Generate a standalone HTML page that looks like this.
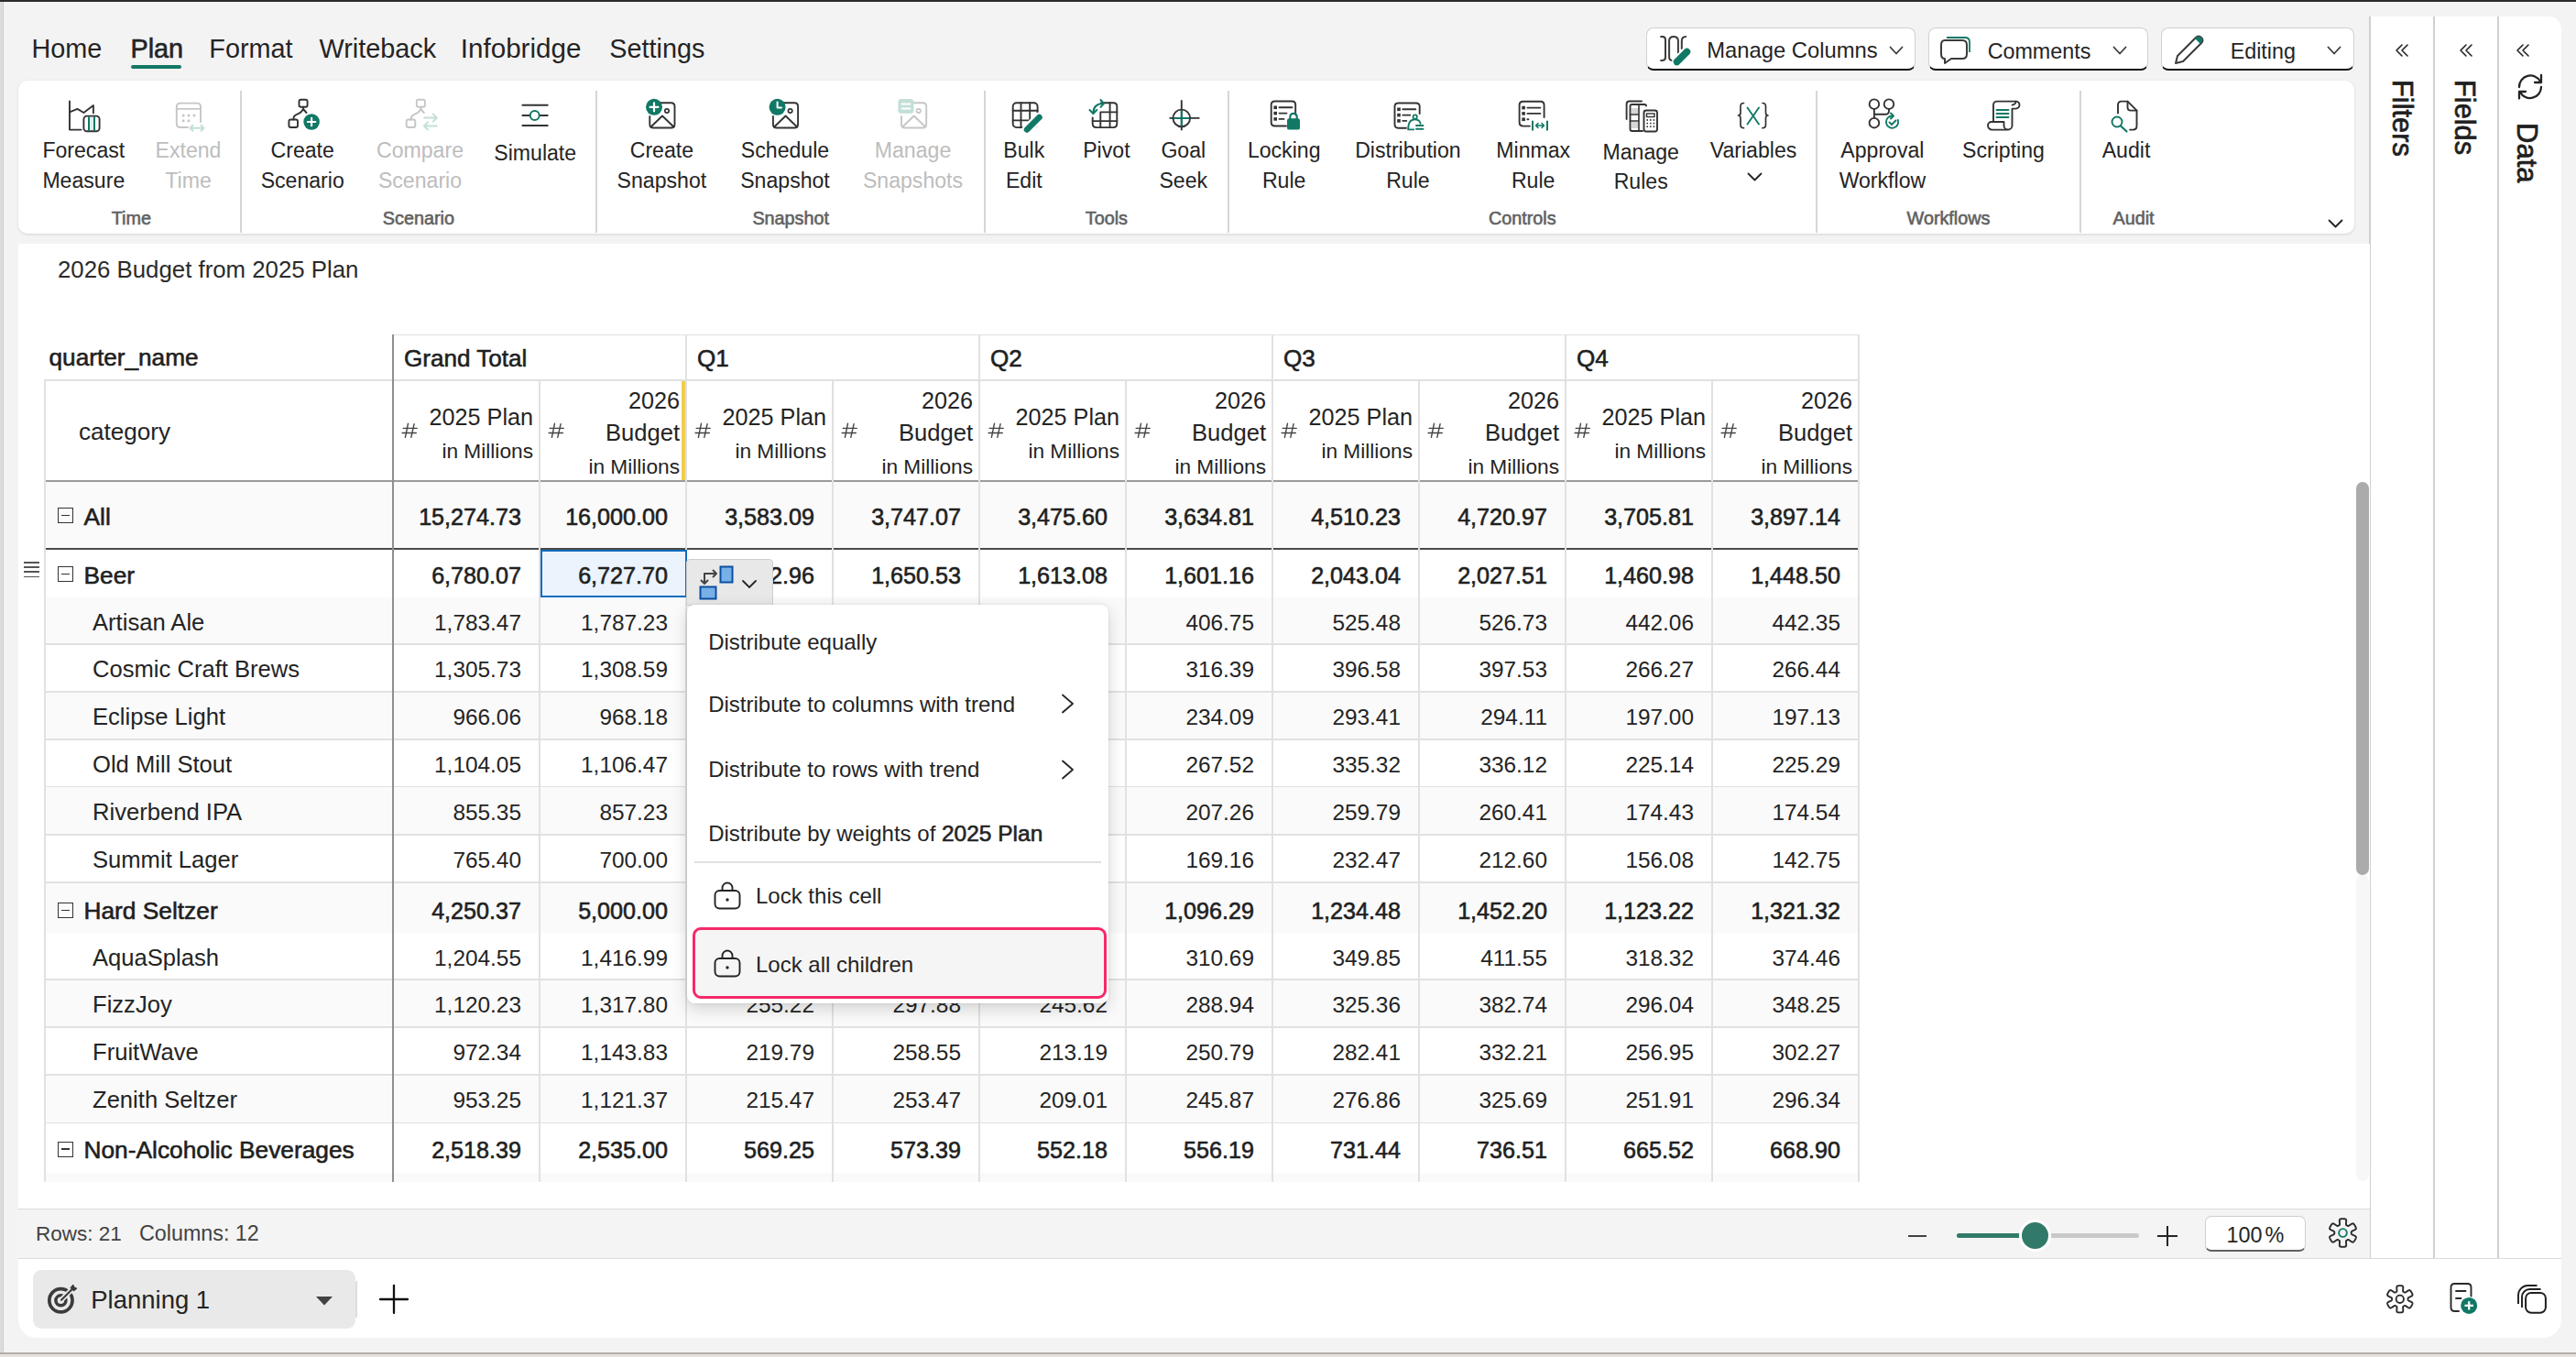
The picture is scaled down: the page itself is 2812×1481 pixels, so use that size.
<!DOCTYPE html>
<html><head><meta charset="utf-8"><style>
html,body{margin:0;padding:0;}
body{width:2812px;height:1481px;position:relative;overflow:hidden;background:#f3f3f3;font-family:'Liberation Sans', sans-serif;}
.a{position:absolute;}
.t{position:absolute;white-space:nowrap;line-height:1;}
</style></head><body>
<div class="a" style="left:0.00px;top:0.00px;width:2812.00px;height:2.00px;background:#2b2b2b"></div>
<div class="a" style="left:0.00px;top:2.00px;width:3.00px;height:1474.00px;background:#dcdcdc"></div>
<div class="a" style="left:3.00px;top:2.00px;width:1.00px;height:1474.00px;background:#cdcdcd"></div>
<div class="a" style="left:0.00px;top:1476.00px;width:2812.00px;height:2.00px;background:#b4ada7"></div>
<div class="a" style="left:0.00px;top:1478.00px;width:2812.00px;height:3.00px;background:#e8e0da"></div>
<div class="t" style="left:34.50px;top:38.52px;font-size:28.8px;font-weight:400;color:#242424;">Home</div>
<div class="t" style="left:142.50px;top:38.52px;font-size:28.8px;font-weight:400;-webkit-text-stroke:0.6px #242424;color:#242424;">Plan</div>
<div class="t" style="left:228.30px;top:38.52px;font-size:28.8px;font-weight:400;color:#242424;">Format</div>
<div class="t" style="left:348.60px;top:38.52px;font-size:28.8px;font-weight:400;color:#242424;">Writeback</div>
<div class="t" style="left:502.80px;top:37.84px;font-size:29.6px;font-weight:400;color:#242424;">Infobridge</div>
<div class="t" style="left:665.30px;top:38.52px;font-size:28.8px;font-weight:400;color:#242424;">Settings</div>
<div class="a" style="left:143.00px;top:71.00px;width:55.00px;height:4.00px;background:#117865;border-radius:2px"></div>
<div class="a" style="left:1797.00px;top:29.70px;width:294.00px;height:47.00px;background:#fff;border:1px solid #d1d1d1;border-bottom:2px solid #111;border-radius:8px;box-sizing:border-box"></div>
<div class="t" style="left:1863.20px;top:42.77px;font-size:23.8px;font-weight:400;color:#242424;">Manage Columns</div>
<svg class="a" style="left:1800.00px;top:30.00px;" width="50" height="48" viewBox="0 0 50 48" fill="none"><path d="M13.1 10 H15 Q18 10 18 13.5 V32.8 Q18 35.9 15 35.9 H13.1" stroke="#3b3b3b" stroke-width="2" stroke-linecap="round"/><path d="M25.3 35.9 Q22.1 35.9 22.1 32 V14.5 Q22.1 10 27 10 Q31.9 10 31.9 14.5 V27.4" stroke="#3b3b3b" stroke-width="2" stroke-linecap="round"/><path d="M40.2 10 Q35.8 10 35.8 15 V23" stroke="#3b3b3b" stroke-width="2" stroke-linecap="round"/><path d="M30.5 37.5 L41.5 26.5" stroke="#fff" stroke-width="11" stroke-linecap="round"/><path d="M30.5 37.5 L41.5 26.5" stroke="#117865" stroke-width="7.5" stroke-linecap="round"/></svg>
<svg class="a" style="left:2062.00px;top:49.50px;" width="16" height="11" viewBox="0 0 16 11" fill="none"><path d="M1.5 1.5 L8 8.5 L14.5 1.5" stroke="#3b3b3b" stroke-width="1.8" stroke-linecap="round" stroke-linejoin="round"/></svg>
<div class="a" style="left:2105.00px;top:29.70px;width:240.00px;height:47.00px;background:#fff;border:1px solid #d1d1d1;border-bottom:2px solid #111;border-radius:8px;box-sizing:border-box"></div>
<div class="t" style="left:2169.70px;top:44.90px;font-size:23.3px;font-weight:400;color:#242424;">Comments</div>
<svg class="a" style="left:2117.00px;top:37.00px;" width="36" height="34" viewBox="0 0 36 34" fill="none"><path d="M8 4 L28 4 Q33 4 33 9 L33 20" stroke="#117865" stroke-width="1.8" fill="none"/><path d="M6 7 L25 7 Q30 7 30 12 L30 22 Q30 27 25 27 L13 27 L6 32 L6 27 Q2 27 2 22 L2 12 Q2 7 6 7 Z" stroke="#3b3b3b" stroke-width="2" fill="#fff" stroke-linejoin="round"/></svg>
<svg class="a" style="left:2305.60px;top:49.50px;" width="16" height="11" viewBox="0 0 16 11" fill="none"><path d="M1.5 1.5 L8 8.5 L14.5 1.5" stroke="#3b3b3b" stroke-width="1.8" stroke-linecap="round" stroke-linejoin="round"/></svg>
<div class="a" style="left:2359.00px;top:29.70px;width:210.50px;height:47.00px;background:#fff;border:1px solid #d1d1d1;border-bottom:2px solid #111;border-radius:8px;box-sizing:border-box"></div>
<div class="t" style="left:2434.70px;top:44.90px;font-size:23.3px;font-weight:400;color:#242424;">Editing</div>
<svg class="a" style="left:2371.00px;top:37.00px;" width="36" height="36" viewBox="0 0 36 36" fill="none"><path d="M4 32 L6 24 L26 4 Q29 1 32 4 Q35 7 32 10 L12 30 Z" stroke="#3b3b3b" stroke-width="2" stroke-linejoin="round"/><path d="M25 5 Q29 1 32 4 Q35 7 31 11 Z" fill="#117865"/></svg>
<svg class="a" style="left:2540.00px;top:49.50px;" width="16" height="11" viewBox="0 0 16 11" fill="none"><path d="M1.5 1.5 L8 8.5 L14.5 1.5" stroke="#3b3b3b" stroke-width="1.8" stroke-linecap="round" stroke-linejoin="round"/></svg>
<div class="a" style="left:2586.00px;top:18.00px;width:210.00px;height:1355.50px;background:#fff;border-top-right-radius:14px"></div>
<div class="a" style="left:2586.00px;top:18.00px;width:1.60px;height:1355.50px;background:#d0d0d0"></div>
<div class="a" style="left:2656.00px;top:18.00px;width:1.60px;height:1355.50px;background:#d0d0d0"></div>
<div class="a" style="left:2726.00px;top:18.00px;width:1.60px;height:1355.50px;background:#d0d0d0"></div>
<svg class="a" style="left:2614.00px;top:47.00px;" width="16" height="16" viewBox="0 0 16 16" fill="none"><path d="M8 2 L2 8 L8 14 M14 2 L8 8 L14 14" stroke="#242424" stroke-width="1.6" stroke-linecap="round" stroke-linejoin="round"/></svg>
<svg class="a" style="left:2684.00px;top:47.00px;" width="16" height="16" viewBox="0 0 16 16" fill="none"><path d="M8 2 L2 8 L8 14 M14 2 L8 8 L14 14" stroke="#242424" stroke-width="1.6" stroke-linecap="round" stroke-linejoin="round"/></svg>
<svg class="a" style="left:2746.00px;top:47.00px;" width="16" height="16" viewBox="0 0 16 16" fill="none"><path d="M8 2 L2 8 L8 14 M14 2 L8 8 L14 14" stroke="#242424" stroke-width="1.6" stroke-linecap="round" stroke-linejoin="round"/></svg>
<div class="t" style="left:2621.2px;top:86.8px;font-size:30.8px;font-weight:400;-webkit-text-stroke:0.7px #1f1f1f;color:#1f1f1f;writing-mode:vertical-rl;line-height:1;transform:translateX(-50%)">Filters</div>
<div class="t" style="left:2690.0px;top:86.8px;font-size:30.8px;font-weight:400;-webkit-text-stroke:0.7px #1f1f1f;color:#1f1f1f;writing-mode:vertical-rl;line-height:1;transform:translateX(-50%)">Fields</div>
<div class="t" style="left:2758.2px;top:134.2px;font-size:31px;font-weight:400;-webkit-text-stroke:0.7px #1f1f1f;color:#1f1f1f;writing-mode:vertical-rl;line-height:1;transform:translateX(-50%)">Data</div>
<svg class="a" style="left:2740.00px;top:75.00px;" width="40" height="40" viewBox="0 0 40 40" fill="none"><path d="M10 20 A12.2 12.2 0 0 1 33 14 M34 7 V15 H27 M34 20 A12.2 12.2 0 0 1 11 25.5 M10 32.5 V25 H17" stroke="#242424" stroke-width="2.3" fill="none" stroke-linecap="round" stroke-linejoin="round"/></svg>
<div class="a" style="left:20.00px;top:88.00px;width:2550.00px;height:167.00px;background:#fff;border-radius:10px;box-shadow:0 1px 3px rgba(0,0,0,0.13)"></div>
<div class="a" style="left:262.20px;top:98.50px;width:1.60px;height:155.00px;background:#d6d6d6"></div>
<div class="a" style="left:650.20px;top:98.50px;width:1.60px;height:155.00px;background:#d6d6d6"></div>
<div class="a" style="left:1074.20px;top:98.50px;width:1.60px;height:155.00px;background:#d6d6d6"></div>
<div class="a" style="left:1340.20px;top:98.50px;width:1.60px;height:155.00px;background:#d6d6d6"></div>
<div class="a" style="left:1982.20px;top:98.50px;width:1.60px;height:155.00px;background:#d6d6d6"></div>
<div class="a" style="left:2270.20px;top:98.50px;width:1.60px;height:155.00px;background:#d6d6d6"></div>
<div class="t" style="left:-508.70px;width:1200px;text-align:center;top:153.37px;font-size:23.1px;font-weight:400;color:#242424;">Forecast</div>
<div class="t" style="left:-508.70px;width:1200px;text-align:center;top:185.56px;font-size:23.1px;font-weight:400;color:#242424;">Measure</div>
<div class="t" style="left:-394.50px;width:1200px;text-align:center;top:153.37px;font-size:23.1px;font-weight:400;color:#bdbdbd;">Extend</div>
<div class="t" style="left:-394.50px;width:1200px;text-align:center;top:185.56px;font-size:23.1px;font-weight:400;color:#bdbdbd;">Time</div>
<div class="t" style="left:-269.80px;width:1200px;text-align:center;top:153.37px;font-size:23.1px;font-weight:400;color:#242424;">Create</div>
<div class="t" style="left:-269.80px;width:1200px;text-align:center;top:185.56px;font-size:23.1px;font-weight:400;color:#242424;">Scenario</div>
<div class="t" style="left:-141.50px;width:1200px;text-align:center;top:153.37px;font-size:23.1px;font-weight:400;color:#bdbdbd;">Compare</div>
<div class="t" style="left:-141.50px;width:1200px;text-align:center;top:185.56px;font-size:23.1px;font-weight:400;color:#bdbdbd;">Scenario</div>
<div class="t" style="left:-15.80px;width:1200px;text-align:center;top:155.67px;font-size:23.1px;font-weight:400;color:#242424;">Simulate</div>
<div class="t" style="left:122.40px;width:1200px;text-align:center;top:153.37px;font-size:23.1px;font-weight:400;color:#242424;">Create</div>
<div class="t" style="left:122.40px;width:1200px;text-align:center;top:185.56px;font-size:23.1px;font-weight:400;color:#242424;">Snapshot</div>
<div class="t" style="left:257.00px;width:1200px;text-align:center;top:153.37px;font-size:23.1px;font-weight:400;color:#242424;">Schedule</div>
<div class="t" style="left:257.00px;width:1200px;text-align:center;top:185.56px;font-size:23.1px;font-weight:400;color:#242424;">Snapshot</div>
<div class="t" style="left:396.50px;width:1200px;text-align:center;top:153.37px;font-size:23.1px;font-weight:400;color:#bdbdbd;">Manage</div>
<div class="t" style="left:396.50px;width:1200px;text-align:center;top:185.56px;font-size:23.1px;font-weight:400;color:#bdbdbd;">Snapshots</div>
<div class="t" style="left:517.80px;width:1200px;text-align:center;top:153.37px;font-size:23.1px;font-weight:400;color:#242424;">Bulk</div>
<div class="t" style="left:517.80px;width:1200px;text-align:center;top:185.56px;font-size:23.1px;font-weight:400;color:#242424;">Edit</div>
<div class="t" style="left:607.90px;width:1200px;text-align:center;top:153.37px;font-size:23.1px;font-weight:400;color:#242424;">Pivot</div>
<div class="t" style="left:691.80px;width:1200px;text-align:center;top:153.37px;font-size:23.1px;font-weight:400;color:#242424;">Goal</div>
<div class="t" style="left:691.80px;width:1200px;text-align:center;top:185.56px;font-size:23.1px;font-weight:400;color:#242424;">Seek</div>
<div class="t" style="left:801.70px;width:1200px;text-align:center;top:153.37px;font-size:23.1px;font-weight:400;color:#242424;">Locking</div>
<div class="t" style="left:801.70px;width:1200px;text-align:center;top:185.56px;font-size:23.1px;font-weight:400;color:#242424;">Rule</div>
<div class="t" style="left:936.90px;width:1200px;text-align:center;top:153.37px;font-size:23.1px;font-weight:400;color:#242424;">Distribution</div>
<div class="t" style="left:936.90px;width:1200px;text-align:center;top:185.56px;font-size:23.1px;font-weight:400;color:#242424;">Rule</div>
<div class="t" style="left:1073.70px;width:1200px;text-align:center;top:153.37px;font-size:23.1px;font-weight:400;color:#242424;">Minmax</div>
<div class="t" style="left:1073.70px;width:1200px;text-align:center;top:185.56px;font-size:23.1px;font-weight:400;color:#242424;">Rule</div>
<div class="t" style="left:1191.20px;width:1200px;text-align:center;top:155.37px;font-size:23.1px;font-weight:400;color:#242424;">Manage</div>
<div class="t" style="left:1191.20px;width:1200px;text-align:center;top:187.17px;font-size:23.1px;font-weight:400;color:#242424;">Rules</div>
<div class="t" style="left:1314.00px;width:1200px;text-align:center;top:153.37px;font-size:23.1px;font-weight:400;color:#242424;">Variables</div>
<svg class="a" style="left:1907.00px;top:188.00px;" width="17" height="10" viewBox="0 0 17 10" fill="none"><path d="M1.5 1.5 L8.5 8.5 L15.5 1.5" stroke="#242424" stroke-width="1.8" stroke-linecap="round" stroke-linejoin="round"/></svg>
<div class="t" style="left:1454.90px;width:1200px;text-align:center;top:153.37px;font-size:23.1px;font-weight:400;color:#242424;">Approval</div>
<div class="t" style="left:1454.90px;width:1200px;text-align:center;top:185.56px;font-size:23.1px;font-weight:400;color:#242424;">Workflow</div>
<div class="t" style="left:1587.00px;width:1200px;text-align:center;top:153.37px;font-size:23.1px;font-weight:400;color:#242424;">Scripting</div>
<div class="t" style="left:1721.00px;width:1200px;text-align:center;top:153.37px;font-size:23.1px;font-weight:400;color:#242424;">Audit</div>
<div class="t" style="left:-456.70px;width:1200px;text-align:center;top:229.47px;font-size:19.8px;font-weight:400;-webkit-text-stroke:0.6px #616161;color:#616161;">Time</div>
<div class="t" style="left:-143.10px;width:1200px;text-align:center;top:229.47px;font-size:19.8px;font-weight:400;-webkit-text-stroke:0.6px #616161;color:#616161;">Scenario</div>
<div class="t" style="left:263.20px;width:1200px;text-align:center;top:229.47px;font-size:19.8px;font-weight:400;-webkit-text-stroke:0.6px #616161;color:#616161;">Snapshot</div>
<div class="t" style="left:607.90px;width:1200px;text-align:center;top:229.47px;font-size:19.8px;font-weight:400;-webkit-text-stroke:0.6px #616161;color:#616161;">Tools</div>
<div class="t" style="left:1061.80px;width:1200px;text-align:center;top:229.47px;font-size:19.8px;font-weight:400;-webkit-text-stroke:0.6px #616161;color:#616161;">Controls</div>
<div class="t" style="left:1527.00px;width:1200px;text-align:center;top:229.47px;font-size:19.8px;font-weight:400;-webkit-text-stroke:0.6px #616161;color:#616161;">Workflows</div>
<div class="t" style="left:1729.00px;width:1200px;text-align:center;top:229.47px;font-size:19.8px;font-weight:400;-webkit-text-stroke:0.6px #616161;color:#616161;">Audit</div>
<svg class="a" style="left:2541.00px;top:239.00px;" width="17" height="10" viewBox="0 0 17 10" fill="none"><path d="M1.5 1.5 L8.5 8.5 L15.5 1.5" stroke="#242424" stroke-width="1.8" stroke-linecap="round" stroke-linejoin="round"/></svg>
<div class="a" style="left:20.00px;top:266.00px;width:2567.00px;height:1053.00px;background:#fff"></div>
<div class="t" style="left:63.00px;top:282.37px;font-size:25.8px;font-weight:400;color:#2b2b2b;">2026 Budget from 2025 Plan</div>
<div class="a" style="left:20.00px;top:1319.00px;width:2567.00px;height:54.00px;background:#f4f4f4"></div>
<div class="a" style="left:20.00px;top:1318.50px;width:2567.00px;height:1.60px;background:#dadada"></div>
<div class="a" style="left:20.00px;top:1372.50px;width:2776.00px;height:1.60px;background:#dadada"></div>
<div class="t" style="left:39.00px;top:1335.67px;font-size:22.5px;font-weight:400;color:#424242;">Rows: 21</div>
<div class="t" style="left:152.00px;top:1334.99px;font-size:23.3px;font-weight:400;color:#424242;">Columns: 12</div>
<div class="a" style="left:20.00px;top:1374.00px;width:2776.00px;height:86.00px;background:#fff;border-bottom-left-radius:20px;border-bottom-right-radius:20px"></div>
<div class="a" style="left:36.00px;top:1386.00px;width:352.00px;height:64.00px;background:#e9e9e9;border-radius:9px"></div>
<div class="a" style="left:388.00px;top:1398.00px;width:2.00px;height:40.00px;background:#dedede"></div>
<div class="t" style="left:99.20px;top:1405.12px;font-size:27.5px;font-weight:400;color:#242424;">Planning 1</div>
<svg class="a" style="left:345.00px;top:1414.50px;" width="18" height="11" viewBox="0 0 18 11" fill="none"><path d="M0 0 L18 0 L9 9.5 Z" fill="#424242"/></svg>
<svg class="a" style="left:413.00px;top:1401.00px;" width="34" height="34" viewBox="0 0 34 34" fill="none"><path d="M17 2 V32 M2 17 H32" stroke="#111" stroke-width="2.3" stroke-linecap="round"/></svg>
<div class="a" style="left:429.00px;top:364.50px;width:1600.00px;height:1.60px;background:#e1e1e1"></div>
<div class="a" style="left:49.00px;top:414.00px;width:1980.00px;height:1.60px;background:#e1e1e1"></div>
<div class="t" style="left:53.50px;top:377.03px;font-size:26.2px;font-weight:400;-webkit-text-stroke:0.6px #1f1f1f;color:#1f1f1f;">quarter_name</div>
<div class="t" style="left:441.00px;top:378.12px;font-size:26.1px;font-weight:400;-webkit-text-stroke:0.6px #1f1f1f;color:#1f1f1f;">Grand Total</div>
<div class="t" style="left:761.00px;top:378.12px;font-size:26.1px;font-weight:400;-webkit-text-stroke:0.6px #1f1f1f;color:#1f1f1f;">Q1</div>
<div class="t" style="left:1081.00px;top:378.12px;font-size:26.1px;font-weight:400;-webkit-text-stroke:0.6px #1f1f1f;color:#1f1f1f;">Q2</div>
<div class="t" style="left:1401.00px;top:378.12px;font-size:26.1px;font-weight:400;-webkit-text-stroke:0.6px #1f1f1f;color:#1f1f1f;">Q3</div>
<div class="t" style="left:1721.00px;top:378.12px;font-size:26.1px;font-weight:400;-webkit-text-stroke:0.6px #1f1f1f;color:#1f1f1f;">Q4</div>
<div class="t" style="left:86.00px;top:458.31px;font-size:26.1px;font-weight:400;color:#242424;">category</div>
<svg class="a" style="left:429.00px;top:455.00px;" width="30" height="30" viewBox="0 0 30 30" fill="none"><path d="M16.5 7.1 L13.4 22.3 M23.1 7.6 L19.8 22.3 M11.2 12.4 H26.2 M10.1 17.5 H25.3" stroke="#444" stroke-width="1.4" stroke-linecap="round"/></svg>
<div class="t" style="left:-618.00px;width:1200px;text-align:right;top:443.38px;font-size:25.2px;font-weight:400;color:#242424;">2025 Plan</div>
<div class="t" style="left:-618.00px;width:1200px;text-align:right;top:480.50px;font-size:22.7px;font-weight:400;color:#242424;">in Millions</div>
<svg class="a" style="left:589.00px;top:455.00px;" width="30" height="30" viewBox="0 0 30 30" fill="none"><path d="M16.5 7.1 L13.4 22.3 M23.1 7.6 L19.8 22.3 M11.2 12.4 H26.2 M10.1 17.5 H25.3" stroke="#444" stroke-width="1.4" stroke-linecap="round"/></svg>
<div class="t" style="left:-458.00px;width:1200px;text-align:right;top:424.88px;font-size:25.2px;font-weight:400;color:#242424;">2026</div>
<div class="t" style="left:-458.00px;width:1200px;text-align:right;top:459.84px;font-size:25.6px;font-weight:400;color:#242424;">Budget</div>
<div class="t" style="left:-458.00px;width:1200px;text-align:right;top:497.50px;font-size:22.7px;font-weight:400;color:#242424;">in Millions</div>
<svg class="a" style="left:749.00px;top:455.00px;" width="30" height="30" viewBox="0 0 30 30" fill="none"><path d="M16.5 7.1 L13.4 22.3 M23.1 7.6 L19.8 22.3 M11.2 12.4 H26.2 M10.1 17.5 H25.3" stroke="#444" stroke-width="1.4" stroke-linecap="round"/></svg>
<div class="t" style="left:-298.00px;width:1200px;text-align:right;top:443.38px;font-size:25.2px;font-weight:400;color:#242424;">2025 Plan</div>
<div class="t" style="left:-298.00px;width:1200px;text-align:right;top:480.50px;font-size:22.7px;font-weight:400;color:#242424;">in Millions</div>
<svg class="a" style="left:909.00px;top:455.00px;" width="30" height="30" viewBox="0 0 30 30" fill="none"><path d="M16.5 7.1 L13.4 22.3 M23.1 7.6 L19.8 22.3 M11.2 12.4 H26.2 M10.1 17.5 H25.3" stroke="#444" stroke-width="1.4" stroke-linecap="round"/></svg>
<div class="t" style="left:-138.00px;width:1200px;text-align:right;top:424.88px;font-size:25.2px;font-weight:400;color:#242424;">2026</div>
<div class="t" style="left:-138.00px;width:1200px;text-align:right;top:459.84px;font-size:25.6px;font-weight:400;color:#242424;">Budget</div>
<div class="t" style="left:-138.00px;width:1200px;text-align:right;top:497.50px;font-size:22.7px;font-weight:400;color:#242424;">in Millions</div>
<svg class="a" style="left:1069.00px;top:455.00px;" width="30" height="30" viewBox="0 0 30 30" fill="none"><path d="M16.5 7.1 L13.4 22.3 M23.1 7.6 L19.8 22.3 M11.2 12.4 H26.2 M10.1 17.5 H25.3" stroke="#444" stroke-width="1.4" stroke-linecap="round"/></svg>
<div class="t" style="left:22.00px;width:1200px;text-align:right;top:443.38px;font-size:25.2px;font-weight:400;color:#242424;">2025 Plan</div>
<div class="t" style="left:22.00px;width:1200px;text-align:right;top:480.50px;font-size:22.7px;font-weight:400;color:#242424;">in Millions</div>
<svg class="a" style="left:1229.00px;top:455.00px;" width="30" height="30" viewBox="0 0 30 30" fill="none"><path d="M16.5 7.1 L13.4 22.3 M23.1 7.6 L19.8 22.3 M11.2 12.4 H26.2 M10.1 17.5 H25.3" stroke="#444" stroke-width="1.4" stroke-linecap="round"/></svg>
<div class="t" style="left:182.00px;width:1200px;text-align:right;top:424.88px;font-size:25.2px;font-weight:400;color:#242424;">2026</div>
<div class="t" style="left:182.00px;width:1200px;text-align:right;top:459.84px;font-size:25.6px;font-weight:400;color:#242424;">Budget</div>
<div class="t" style="left:182.00px;width:1200px;text-align:right;top:497.50px;font-size:22.7px;font-weight:400;color:#242424;">in Millions</div>
<svg class="a" style="left:1389.00px;top:455.00px;" width="30" height="30" viewBox="0 0 30 30" fill="none"><path d="M16.5 7.1 L13.4 22.3 M23.1 7.6 L19.8 22.3 M11.2 12.4 H26.2 M10.1 17.5 H25.3" stroke="#444" stroke-width="1.4" stroke-linecap="round"/></svg>
<div class="t" style="left:342.00px;width:1200px;text-align:right;top:443.38px;font-size:25.2px;font-weight:400;color:#242424;">2025 Plan</div>
<div class="t" style="left:342.00px;width:1200px;text-align:right;top:480.50px;font-size:22.7px;font-weight:400;color:#242424;">in Millions</div>
<svg class="a" style="left:1549.00px;top:455.00px;" width="30" height="30" viewBox="0 0 30 30" fill="none"><path d="M16.5 7.1 L13.4 22.3 M23.1 7.6 L19.8 22.3 M11.2 12.4 H26.2 M10.1 17.5 H25.3" stroke="#444" stroke-width="1.4" stroke-linecap="round"/></svg>
<div class="t" style="left:502.00px;width:1200px;text-align:right;top:424.88px;font-size:25.2px;font-weight:400;color:#242424;">2026</div>
<div class="t" style="left:502.00px;width:1200px;text-align:right;top:459.84px;font-size:25.6px;font-weight:400;color:#242424;">Budget</div>
<div class="t" style="left:502.00px;width:1200px;text-align:right;top:497.50px;font-size:22.7px;font-weight:400;color:#242424;">in Millions</div>
<svg class="a" style="left:1709.00px;top:455.00px;" width="30" height="30" viewBox="0 0 30 30" fill="none"><path d="M16.5 7.1 L13.4 22.3 M23.1 7.6 L19.8 22.3 M11.2 12.4 H26.2 M10.1 17.5 H25.3" stroke="#444" stroke-width="1.4" stroke-linecap="round"/></svg>
<div class="t" style="left:662.00px;width:1200px;text-align:right;top:443.38px;font-size:25.2px;font-weight:400;color:#242424;">2025 Plan</div>
<div class="t" style="left:662.00px;width:1200px;text-align:right;top:480.50px;font-size:22.7px;font-weight:400;color:#242424;">in Millions</div>
<svg class="a" style="left:1869.00px;top:455.00px;" width="30" height="30" viewBox="0 0 30 30" fill="none"><path d="M16.5 7.1 L13.4 22.3 M23.1 7.6 L19.8 22.3 M11.2 12.4 H26.2 M10.1 17.5 H25.3" stroke="#444" stroke-width="1.4" stroke-linecap="round"/></svg>
<div class="t" style="left:822.00px;width:1200px;text-align:right;top:424.88px;font-size:25.2px;font-weight:400;color:#242424;">2026</div>
<div class="t" style="left:822.00px;width:1200px;text-align:right;top:459.84px;font-size:25.6px;font-weight:400;color:#242424;">Budget</div>
<div class="t" style="left:822.00px;width:1200px;text-align:right;top:497.50px;font-size:22.7px;font-weight:400;color:#242424;">in Millions</div>
<div class="a" style="left:744.00px;top:416.00px;width:4.20px;height:108.50px;background:#f2cd4f"></div>
<div class="a" style="left:49.00px;top:524.00px;width:1980.00px;height:2.00px;background:#9a9a9a"></div>
<div class="a" style="left:0;top:0;width:2812px;height:1289.5px;overflow:hidden">
<div class="a" style="left:49.00px;top:526.00px;width:1980.00px;height:72.50px;background:#fafafa"></div>
<div class="a" style="left:49.00px;top:652.00px;width:1980.00px;height:50.80px;background:#fafafa"></div>
<div class="a" style="left:49.00px;top:754.90px;width:1980.00px;height:52.10px;background:#fafafa"></div>
<div class="a" style="left:49.00px;top:858.60px;width:1980.00px;height:52.40px;background:#fafafa"></div>
<div class="a" style="left:49.00px;top:963.00px;width:1980.00px;height:54.50px;background:#fafafa"></div>
<div class="a" style="left:49.00px;top:1068.80px;width:1980.00px;height:52.20px;background:#fafafa"></div>
<div class="a" style="left:49.00px;top:1173.00px;width:1980.00px;height:52.50px;background:#fafafa"></div>
<div class="a" style="left:49.00px;top:1280.00px;width:1980.00px;height:52.00px;background:#fafafa"></div>
<div class="a" style="left:49.00px;top:702.00px;width:1980.00px;height:1.60px;background:#e1e1e1"></div>
<div class="a" style="left:49.00px;top:754.10px;width:1980.00px;height:1.60px;background:#e1e1e1"></div>
<div class="a" style="left:49.00px;top:806.20px;width:1980.00px;height:1.60px;background:#e1e1e1"></div>
<div class="a" style="left:49.00px;top:857.80px;width:1980.00px;height:1.60px;background:#e1e1e1"></div>
<div class="a" style="left:49.00px;top:910.20px;width:1980.00px;height:1.60px;background:#e1e1e1"></div>
<div class="a" style="left:49.00px;top:962.20px;width:1980.00px;height:1.60px;background:#e1e1e1"></div>
<div class="a" style="left:49.00px;top:1068.00px;width:1980.00px;height:1.60px;background:#e1e1e1"></div>
<div class="a" style="left:49.00px;top:1120.20px;width:1980.00px;height:1.60px;background:#e1e1e1"></div>
<div class="a" style="left:49.00px;top:1172.20px;width:1980.00px;height:1.60px;background:#e1e1e1"></div>
<div class="a" style="left:49.00px;top:1224.70px;width:1980.00px;height:1.60px;background:#e1e1e1"></div>
<div class="a" style="left:49.00px;top:597.80px;width:1980.00px;height:2.40px;background:#4a4a4a"></div>
<div class="a" style="left:48.20px;top:414.00px;width:1.60px;height:875.50px;background:#e1e1e1"></div>
<div class="a" style="left:428.00px;top:364.50px;width:2.00px;height:925.00px;background:#8f8f8f"></div>
<div class="a" style="left:588.20px;top:414.00px;width:1.60px;height:875.50px;background:#e1e1e1"></div>
<div class="a" style="left:748.20px;top:364.50px;width:1.60px;height:925.00px;background:#e1e1e1"></div>
<div class="a" style="left:908.20px;top:414.00px;width:1.60px;height:875.50px;background:#e1e1e1"></div>
<div class="a" style="left:1068.20px;top:364.50px;width:1.60px;height:925.00px;background:#e1e1e1"></div>
<div class="a" style="left:1228.20px;top:414.00px;width:1.60px;height:875.50px;background:#e1e1e1"></div>
<div class="a" style="left:1388.20px;top:364.50px;width:1.60px;height:925.00px;background:#e1e1e1"></div>
<div class="a" style="left:1548.20px;top:414.00px;width:1.60px;height:875.50px;background:#e1e1e1"></div>
<div class="a" style="left:1708.20px;top:364.50px;width:1.60px;height:925.00px;background:#e1e1e1"></div>
<div class="a" style="left:1868.20px;top:414.00px;width:1.60px;height:875.50px;background:#e1e1e1"></div>
<div class="a" style="left:2028.20px;top:364.50px;width:1.60px;height:925.00px;background:#e1e1e1"></div>
<div class="a" style="left:589.50px;top:599.50px;width:160.00px;height:52.00px;background:#ebf3fc;border:2px solid #0f6cbd;box-sizing:border-box"></div>
<div class="a" style="left:63.00px;top:554.10px;width:17.00px;height:17.00px;border:1.5px solid #333;box-sizing:border-box"></div>
<div class="a" style="left:67.00px;top:561.80px;width:9.00px;height:1.50px;background:#333"></div>
<div class="t" style="left:91.50px;top:550.74px;font-size:26.3px;font-weight:400;-webkit-text-stroke:0.6px #1f1f1f;color:#1f1f1f;">All</div>
<div class="t" style="left:-631.00px;width:1200px;text-align:right;top:551.72px;font-size:25.15px;font-weight:400;-webkit-text-stroke:0.6px #1f1f1f;color:#1f1f1f;">15,274.73</div>
<div class="t" style="left:-471.00px;width:1200px;text-align:right;top:551.72px;font-size:25.15px;font-weight:400;-webkit-text-stroke:0.6px #1f1f1f;color:#1f1f1f;">16,000.00</div>
<div class="t" style="left:-311.00px;width:1200px;text-align:right;top:551.72px;font-size:25.15px;font-weight:400;-webkit-text-stroke:0.6px #1f1f1f;color:#1f1f1f;">3,583.09</div>
<div class="t" style="left:-151.00px;width:1200px;text-align:right;top:551.72px;font-size:25.15px;font-weight:400;-webkit-text-stroke:0.6px #1f1f1f;color:#1f1f1f;">3,747.07</div>
<div class="t" style="left:9.00px;width:1200px;text-align:right;top:551.72px;font-size:25.15px;font-weight:400;-webkit-text-stroke:0.6px #1f1f1f;color:#1f1f1f;">3,475.60</div>
<div class="t" style="left:169.00px;width:1200px;text-align:right;top:551.72px;font-size:25.15px;font-weight:400;-webkit-text-stroke:0.6px #1f1f1f;color:#1f1f1f;">3,634.81</div>
<div class="t" style="left:329.00px;width:1200px;text-align:right;top:551.72px;font-size:25.15px;font-weight:400;-webkit-text-stroke:0.6px #1f1f1f;color:#1f1f1f;">4,510.23</div>
<div class="t" style="left:489.00px;width:1200px;text-align:right;top:551.72px;font-size:25.15px;font-weight:400;-webkit-text-stroke:0.6px #1f1f1f;color:#1f1f1f;">4,720.97</div>
<div class="t" style="left:649.00px;width:1200px;text-align:right;top:551.72px;font-size:25.15px;font-weight:400;-webkit-text-stroke:0.6px #1f1f1f;color:#1f1f1f;">3,705.81</div>
<div class="t" style="left:809.00px;width:1200px;text-align:right;top:551.72px;font-size:25.15px;font-weight:400;-webkit-text-stroke:0.6px #1f1f1f;color:#1f1f1f;">3,897.14</div>
<div class="a" style="left:63.00px;top:618.20px;width:17.00px;height:17.00px;border:1.5px solid #333;box-sizing:border-box"></div>
<div class="a" style="left:67.00px;top:625.90px;width:9.00px;height:1.50px;background:#333"></div>
<div class="t" style="left:91.50px;top:614.84px;font-size:26.3px;font-weight:400;-webkit-text-stroke:0.6px #1f1f1f;color:#1f1f1f;">Beer</div>
<div class="t" style="left:-631.00px;width:1200px;text-align:right;top:615.82px;font-size:25.15px;font-weight:400;-webkit-text-stroke:0.6px #1f1f1f;color:#1f1f1f;">6,780.07</div>
<div class="t" style="left:-471.00px;width:1200px;text-align:right;top:615.82px;font-size:25.15px;font-weight:400;-webkit-text-stroke:0.6px #1f1f1f;color:#1f1f1f;">6,727.70</div>
<div class="t" style="left:-311.00px;width:1200px;text-align:right;top:615.82px;font-size:25.15px;font-weight:400;-webkit-text-stroke:0.6px #1f1f1f;color:#1f1f1f;">1,632.96</div>
<div class="t" style="left:-151.00px;width:1200px;text-align:right;top:615.82px;font-size:25.15px;font-weight:400;-webkit-text-stroke:0.6px #1f1f1f;color:#1f1f1f;">1,650.53</div>
<div class="t" style="left:9.00px;width:1200px;text-align:right;top:615.82px;font-size:25.15px;font-weight:400;-webkit-text-stroke:0.6px #1f1f1f;color:#1f1f1f;">1,613.08</div>
<div class="t" style="left:169.00px;width:1200px;text-align:right;top:615.82px;font-size:25.15px;font-weight:400;-webkit-text-stroke:0.6px #1f1f1f;color:#1f1f1f;">1,601.16</div>
<div class="t" style="left:329.00px;width:1200px;text-align:right;top:615.82px;font-size:25.15px;font-weight:400;-webkit-text-stroke:0.6px #1f1f1f;color:#1f1f1f;">2,043.04</div>
<div class="t" style="left:489.00px;width:1200px;text-align:right;top:615.82px;font-size:25.15px;font-weight:400;-webkit-text-stroke:0.6px #1f1f1f;color:#1f1f1f;">2,027.51</div>
<div class="t" style="left:649.00px;width:1200px;text-align:right;top:615.82px;font-size:25.15px;font-weight:400;-webkit-text-stroke:0.6px #1f1f1f;color:#1f1f1f;">1,460.98</div>
<div class="t" style="left:809.00px;width:1200px;text-align:right;top:615.82px;font-size:25.15px;font-weight:400;-webkit-text-stroke:0.6px #1f1f1f;color:#1f1f1f;">1,448.50</div>
<div class="t" style="left:101.00px;top:666.74px;font-size:25.6px;font-weight:400;color:#242424;">Artisan Ale</div>
<div class="t" style="left:-631.00px;width:1200px;text-align:right;top:667.76px;font-size:24.4px;font-weight:400;color:#242424;">1,783.47</div>
<div class="t" style="left:-471.00px;width:1200px;text-align:right;top:667.76px;font-size:24.4px;font-weight:400;color:#242424;">1,787.23</div>
<div class="t" style="left:-311.00px;width:1200px;text-align:right;top:667.76px;font-size:24.4px;font-weight:400;color:#242424;">427.95</div>
<div class="t" style="left:-151.00px;width:1200px;text-align:right;top:667.76px;font-size:24.4px;font-weight:400;color:#242424;">428.86</div>
<div class="t" style="left:9.00px;width:1200px;text-align:right;top:667.76px;font-size:24.4px;font-weight:400;color:#242424;">412.80</div>
<div class="t" style="left:169.00px;width:1200px;text-align:right;top:667.76px;font-size:24.4px;font-weight:400;color:#242424;">406.75</div>
<div class="t" style="left:329.00px;width:1200px;text-align:right;top:667.76px;font-size:24.4px;font-weight:400;color:#242424;">525.48</div>
<div class="t" style="left:489.00px;width:1200px;text-align:right;top:667.76px;font-size:24.4px;font-weight:400;color:#242424;">526.73</div>
<div class="t" style="left:649.00px;width:1200px;text-align:right;top:667.76px;font-size:24.4px;font-weight:400;color:#242424;">442.06</div>
<div class="t" style="left:809.00px;width:1200px;text-align:right;top:667.76px;font-size:24.4px;font-weight:400;color:#242424;">442.35</div>
<div class="t" style="left:101.00px;top:717.84px;font-size:25.6px;font-weight:400;color:#242424;">Cosmic Craft Brews</div>
<div class="t" style="left:-631.00px;width:1200px;text-align:right;top:718.86px;font-size:24.4px;font-weight:400;color:#242424;">1,305.73</div>
<div class="t" style="left:-471.00px;width:1200px;text-align:right;top:718.86px;font-size:24.4px;font-weight:400;color:#242424;">1,308.59</div>
<div class="t" style="left:-311.00px;width:1200px;text-align:right;top:718.86px;font-size:24.4px;font-weight:400;color:#242424;">313.37</div>
<div class="t" style="left:-151.00px;width:1200px;text-align:right;top:718.86px;font-size:24.4px;font-weight:400;color:#242424;">314.06</div>
<div class="t" style="left:9.00px;width:1200px;text-align:right;top:718.86px;font-size:24.4px;font-weight:400;color:#242424;">318.37</div>
<div class="t" style="left:169.00px;width:1200px;text-align:right;top:718.86px;font-size:24.4px;font-weight:400;color:#242424;">316.39</div>
<div class="t" style="left:329.00px;width:1200px;text-align:right;top:718.86px;font-size:24.4px;font-weight:400;color:#242424;">396.58</div>
<div class="t" style="left:489.00px;width:1200px;text-align:right;top:718.86px;font-size:24.4px;font-weight:400;color:#242424;">397.53</div>
<div class="t" style="left:649.00px;width:1200px;text-align:right;top:718.86px;font-size:24.4px;font-weight:400;color:#242424;">266.27</div>
<div class="t" style="left:809.00px;width:1200px;text-align:right;top:718.86px;font-size:24.4px;font-weight:400;color:#242424;">266.44</div>
<div class="t" style="left:101.00px;top:769.84px;font-size:25.6px;font-weight:400;color:#242424;">Eclipse Light</div>
<div class="t" style="left:-631.00px;width:1200px;text-align:right;top:770.86px;font-size:24.4px;font-weight:400;color:#242424;">966.06</div>
<div class="t" style="left:-471.00px;width:1200px;text-align:right;top:770.86px;font-size:24.4px;font-weight:400;color:#242424;">968.18</div>
<div class="t" style="left:-311.00px;width:1200px;text-align:right;top:770.86px;font-size:24.4px;font-weight:400;color:#242424;">231.85</div>
<div class="t" style="left:-151.00px;width:1200px;text-align:right;top:770.86px;font-size:24.4px;font-weight:400;color:#242424;">232.36</div>
<div class="t" style="left:9.00px;width:1200px;text-align:right;top:770.86px;font-size:24.4px;font-weight:400;color:#242424;">235.56</div>
<div class="t" style="left:169.00px;width:1200px;text-align:right;top:770.86px;font-size:24.4px;font-weight:400;color:#242424;">234.09</div>
<div class="t" style="left:329.00px;width:1200px;text-align:right;top:770.86px;font-size:24.4px;font-weight:400;color:#242424;">293.41</div>
<div class="t" style="left:489.00px;width:1200px;text-align:right;top:770.86px;font-size:24.4px;font-weight:400;color:#242424;">294.11</div>
<div class="t" style="left:649.00px;width:1200px;text-align:right;top:770.86px;font-size:24.4px;font-weight:400;color:#242424;">197.00</div>
<div class="t" style="left:809.00px;width:1200px;text-align:right;top:770.86px;font-size:24.4px;font-weight:400;color:#242424;">197.13</div>
<div class="t" style="left:101.00px;top:821.94px;font-size:25.6px;font-weight:400;color:#242424;">Old Mill Stout</div>
<div class="t" style="left:-631.00px;width:1200px;text-align:right;top:822.96px;font-size:24.4px;font-weight:400;color:#242424;">1,104.05</div>
<div class="t" style="left:-471.00px;width:1200px;text-align:right;top:822.96px;font-size:24.4px;font-weight:400;color:#242424;">1,106.47</div>
<div class="t" style="left:-311.00px;width:1200px;text-align:right;top:822.96px;font-size:24.4px;font-weight:400;color:#242424;">264.97</div>
<div class="t" style="left:-151.00px;width:1200px;text-align:right;top:822.96px;font-size:24.4px;font-weight:400;color:#242424;">265.55</div>
<div class="t" style="left:9.00px;width:1200px;text-align:right;top:822.96px;font-size:24.4px;font-weight:400;color:#242424;">269.21</div>
<div class="t" style="left:169.00px;width:1200px;text-align:right;top:822.96px;font-size:24.4px;font-weight:400;color:#242424;">267.52</div>
<div class="t" style="left:329.00px;width:1200px;text-align:right;top:822.96px;font-size:24.4px;font-weight:400;color:#242424;">335.32</div>
<div class="t" style="left:489.00px;width:1200px;text-align:right;top:822.96px;font-size:24.4px;font-weight:400;color:#242424;">336.12</div>
<div class="t" style="left:649.00px;width:1200px;text-align:right;top:822.96px;font-size:24.4px;font-weight:400;color:#242424;">225.14</div>
<div class="t" style="left:809.00px;width:1200px;text-align:right;top:822.96px;font-size:24.4px;font-weight:400;color:#242424;">225.29</div>
<div class="t" style="left:101.00px;top:874.04px;font-size:25.6px;font-weight:400;color:#242424;">Riverbend IPA</div>
<div class="t" style="left:-631.00px;width:1200px;text-align:right;top:875.06px;font-size:24.4px;font-weight:400;color:#242424;">855.35</div>
<div class="t" style="left:-471.00px;width:1200px;text-align:right;top:875.06px;font-size:24.4px;font-weight:400;color:#242424;">857.23</div>
<div class="t" style="left:-311.00px;width:1200px;text-align:right;top:875.06px;font-size:24.4px;font-weight:400;color:#242424;">205.28</div>
<div class="t" style="left:-151.00px;width:1200px;text-align:right;top:875.06px;font-size:24.4px;font-weight:400;color:#242424;">205.74</div>
<div class="t" style="left:9.00px;width:1200px;text-align:right;top:875.06px;font-size:24.4px;font-weight:400;color:#242424;">208.57</div>
<div class="t" style="left:169.00px;width:1200px;text-align:right;top:875.06px;font-size:24.4px;font-weight:400;color:#242424;">207.26</div>
<div class="t" style="left:329.00px;width:1200px;text-align:right;top:875.06px;font-size:24.4px;font-weight:400;color:#242424;">259.79</div>
<div class="t" style="left:489.00px;width:1200px;text-align:right;top:875.06px;font-size:24.4px;font-weight:400;color:#242424;">260.41</div>
<div class="t" style="left:649.00px;width:1200px;text-align:right;top:875.06px;font-size:24.4px;font-weight:400;color:#242424;">174.43</div>
<div class="t" style="left:809.00px;width:1200px;text-align:right;top:875.06px;font-size:24.4px;font-weight:400;color:#242424;">174.54</div>
<div class="t" style="left:101.00px;top:926.14px;font-size:25.6px;font-weight:400;color:#242424;">Summit Lager</div>
<div class="t" style="left:-631.00px;width:1200px;text-align:right;top:927.16px;font-size:24.4px;font-weight:400;color:#242424;">765.40</div>
<div class="t" style="left:-471.00px;width:1200px;text-align:right;top:927.16px;font-size:24.4px;font-weight:400;color:#242424;">700.00</div>
<div class="t" style="left:-311.00px;width:1200px;text-align:right;top:927.16px;font-size:24.4px;font-weight:400;color:#242424;">183.70</div>
<div class="t" style="left:-151.00px;width:1200px;text-align:right;top:927.16px;font-size:24.4px;font-weight:400;color:#242424;">168.00</div>
<div class="t" style="left:9.00px;width:1200px;text-align:right;top:927.16px;font-size:24.4px;font-weight:400;color:#242424;">190.28</div>
<div class="t" style="left:169.00px;width:1200px;text-align:right;top:927.16px;font-size:24.4px;font-weight:400;color:#242424;">169.16</div>
<div class="t" style="left:329.00px;width:1200px;text-align:right;top:927.16px;font-size:24.4px;font-weight:400;color:#242424;">232.47</div>
<div class="t" style="left:489.00px;width:1200px;text-align:right;top:927.16px;font-size:24.4px;font-weight:400;color:#242424;">212.60</div>
<div class="t" style="left:649.00px;width:1200px;text-align:right;top:927.16px;font-size:24.4px;font-weight:400;color:#242424;">156.08</div>
<div class="t" style="left:809.00px;width:1200px;text-align:right;top:927.16px;font-size:24.4px;font-weight:400;color:#242424;">142.75</div>
<div class="a" style="left:63.00px;top:984.80px;width:17.00px;height:17.00px;border:1.5px solid #333;box-sizing:border-box"></div>
<div class="a" style="left:67.00px;top:992.50px;width:9.00px;height:1.50px;background:#333"></div>
<div class="t" style="left:91.50px;top:981.44px;font-size:26.3px;font-weight:400;-webkit-text-stroke:0.6px #1f1f1f;color:#1f1f1f;">Hard Seltzer</div>
<div class="t" style="left:-631.00px;width:1200px;text-align:right;top:982.42px;font-size:25.15px;font-weight:400;-webkit-text-stroke:0.6px #1f1f1f;color:#1f1f1f;">4,250.37</div>
<div class="t" style="left:-471.00px;width:1200px;text-align:right;top:982.42px;font-size:25.15px;font-weight:400;-webkit-text-stroke:0.6px #1f1f1f;color:#1f1f1f;">5,000.00</div>
<div class="t" style="left:-311.00px;width:1200px;text-align:right;top:982.42px;font-size:25.15px;font-weight:400;-webkit-text-stroke:0.6px #1f1f1f;color:#1f1f1f;">966.44</div>
<div class="t" style="left:-151.00px;width:1200px;text-align:right;top:982.42px;font-size:25.15px;font-weight:400;-webkit-text-stroke:0.6px #1f1f1f;color:#1f1f1f;">1,136.86</div>
<div class="t" style="left:9.00px;width:1200px;text-align:right;top:982.42px;font-size:25.15px;font-weight:400;-webkit-text-stroke:0.6px #1f1f1f;color:#1f1f1f;">926.23</div>
<div class="t" style="left:169.00px;width:1200px;text-align:right;top:982.42px;font-size:25.15px;font-weight:400;-webkit-text-stroke:0.6px #1f1f1f;color:#1f1f1f;">1,096.29</div>
<div class="t" style="left:329.00px;width:1200px;text-align:right;top:982.42px;font-size:25.15px;font-weight:400;-webkit-text-stroke:0.6px #1f1f1f;color:#1f1f1f;">1,234.48</div>
<div class="t" style="left:489.00px;width:1200px;text-align:right;top:982.42px;font-size:25.15px;font-weight:400;-webkit-text-stroke:0.6px #1f1f1f;color:#1f1f1f;">1,452.20</div>
<div class="t" style="left:649.00px;width:1200px;text-align:right;top:982.42px;font-size:25.15px;font-weight:400;-webkit-text-stroke:0.6px #1f1f1f;color:#1f1f1f;">1,123.22</div>
<div class="t" style="left:809.00px;width:1200px;text-align:right;top:982.42px;font-size:25.15px;font-weight:400;-webkit-text-stroke:0.6px #1f1f1f;color:#1f1f1f;">1,321.32</div>
<div class="t" style="left:101.00px;top:1032.74px;font-size:25.6px;font-weight:400;color:#242424;">AquaSplash</div>
<div class="t" style="left:-631.00px;width:1200px;text-align:right;top:1033.76px;font-size:24.4px;font-weight:400;color:#242424;">1,204.55</div>
<div class="t" style="left:-471.00px;width:1200px;text-align:right;top:1033.76px;font-size:24.4px;font-weight:400;color:#242424;">1,416.99</div>
<div class="t" style="left:-311.00px;width:1200px;text-align:right;top:1033.76px;font-size:24.4px;font-weight:400;color:#242424;">273.91</div>
<div class="t" style="left:-151.00px;width:1200px;text-align:right;top:1033.76px;font-size:24.4px;font-weight:400;color:#242424;">322.20</div>
<div class="t" style="left:9.00px;width:1200px;text-align:right;top:1033.76px;font-size:24.4px;font-weight:400;color:#242424;">262.51</div>
<div class="t" style="left:169.00px;width:1200px;text-align:right;top:1033.76px;font-size:24.4px;font-weight:400;color:#242424;">310.69</div>
<div class="t" style="left:329.00px;width:1200px;text-align:right;top:1033.76px;font-size:24.4px;font-weight:400;color:#242424;">349.85</div>
<div class="t" style="left:489.00px;width:1200px;text-align:right;top:1033.76px;font-size:24.4px;font-weight:400;color:#242424;">411.55</div>
<div class="t" style="left:649.00px;width:1200px;text-align:right;top:1033.76px;font-size:24.4px;font-weight:400;color:#242424;">318.32</div>
<div class="t" style="left:809.00px;width:1200px;text-align:right;top:1033.76px;font-size:24.4px;font-weight:400;color:#242424;">374.46</div>
<div class="t" style="left:101.00px;top:1084.14px;font-size:25.6px;font-weight:400;color:#242424;">FizzJoy</div>
<div class="t" style="left:-631.00px;width:1200px;text-align:right;top:1085.16px;font-size:24.4px;font-weight:400;color:#242424;">1,120.23</div>
<div class="t" style="left:-471.00px;width:1200px;text-align:right;top:1085.16px;font-size:24.4px;font-weight:400;color:#242424;">1,317.80</div>
<div class="t" style="left:-311.00px;width:1200px;text-align:right;top:1085.16px;font-size:24.4px;font-weight:400;color:#242424;">255.22</div>
<div class="t" style="left:-151.00px;width:1200px;text-align:right;top:1085.16px;font-size:24.4px;font-weight:400;color:#242424;">297.88</div>
<div class="t" style="left:9.00px;width:1200px;text-align:right;top:1085.16px;font-size:24.4px;font-weight:400;color:#242424;">245.62</div>
<div class="t" style="left:169.00px;width:1200px;text-align:right;top:1085.16px;font-size:24.4px;font-weight:400;color:#242424;">288.94</div>
<div class="t" style="left:329.00px;width:1200px;text-align:right;top:1085.16px;font-size:24.4px;font-weight:400;color:#242424;">325.36</div>
<div class="t" style="left:489.00px;width:1200px;text-align:right;top:1085.16px;font-size:24.4px;font-weight:400;color:#242424;">382.74</div>
<div class="t" style="left:649.00px;width:1200px;text-align:right;top:1085.16px;font-size:24.4px;font-weight:400;color:#242424;">296.04</div>
<div class="t" style="left:809.00px;width:1200px;text-align:right;top:1085.16px;font-size:24.4px;font-weight:400;color:#242424;">348.25</div>
<div class="t" style="left:101.00px;top:1136.34px;font-size:25.6px;font-weight:400;color:#242424;">FruitWave</div>
<div class="t" style="left:-631.00px;width:1200px;text-align:right;top:1137.36px;font-size:24.4px;font-weight:400;color:#242424;">972.34</div>
<div class="t" style="left:-471.00px;width:1200px;text-align:right;top:1137.36px;font-size:24.4px;font-weight:400;color:#242424;">1,143.83</div>
<div class="t" style="left:-311.00px;width:1200px;text-align:right;top:1137.36px;font-size:24.4px;font-weight:400;color:#242424;">219.79</div>
<div class="t" style="left:-151.00px;width:1200px;text-align:right;top:1137.36px;font-size:24.4px;font-weight:400;color:#242424;">258.55</div>
<div class="t" style="left:9.00px;width:1200px;text-align:right;top:1137.36px;font-size:24.4px;font-weight:400;color:#242424;">213.19</div>
<div class="t" style="left:169.00px;width:1200px;text-align:right;top:1137.36px;font-size:24.4px;font-weight:400;color:#242424;">250.79</div>
<div class="t" style="left:329.00px;width:1200px;text-align:right;top:1137.36px;font-size:24.4px;font-weight:400;color:#242424;">282.41</div>
<div class="t" style="left:489.00px;width:1200px;text-align:right;top:1137.36px;font-size:24.4px;font-weight:400;color:#242424;">332.21</div>
<div class="t" style="left:649.00px;width:1200px;text-align:right;top:1137.36px;font-size:24.4px;font-weight:400;color:#242424;">256.95</div>
<div class="t" style="left:809.00px;width:1200px;text-align:right;top:1137.36px;font-size:24.4px;font-weight:400;color:#242424;">302.27</div>
<div class="t" style="left:101.00px;top:1188.34px;font-size:25.6px;font-weight:400;color:#242424;">Zenith Seltzer</div>
<div class="t" style="left:-631.00px;width:1200px;text-align:right;top:1189.36px;font-size:24.4px;font-weight:400;color:#242424;">953.25</div>
<div class="t" style="left:-471.00px;width:1200px;text-align:right;top:1189.36px;font-size:24.4px;font-weight:400;color:#242424;">1,121.37</div>
<div class="t" style="left:-311.00px;width:1200px;text-align:right;top:1189.36px;font-size:24.4px;font-weight:400;color:#242424;">215.47</div>
<div class="t" style="left:-151.00px;width:1200px;text-align:right;top:1189.36px;font-size:24.4px;font-weight:400;color:#242424;">253.47</div>
<div class="t" style="left:9.00px;width:1200px;text-align:right;top:1189.36px;font-size:24.4px;font-weight:400;color:#242424;">209.01</div>
<div class="t" style="left:169.00px;width:1200px;text-align:right;top:1189.36px;font-size:24.4px;font-weight:400;color:#242424;">245.87</div>
<div class="t" style="left:329.00px;width:1200px;text-align:right;top:1189.36px;font-size:24.4px;font-weight:400;color:#242424;">276.86</div>
<div class="t" style="left:489.00px;width:1200px;text-align:right;top:1189.36px;font-size:24.4px;font-weight:400;color:#242424;">325.69</div>
<div class="t" style="left:649.00px;width:1200px;text-align:right;top:1189.36px;font-size:24.4px;font-weight:400;color:#242424;">251.91</div>
<div class="t" style="left:809.00px;width:1200px;text-align:right;top:1189.36px;font-size:24.4px;font-weight:400;color:#242424;">296.34</div>
<div class="a" style="left:63.00px;top:1245.50px;width:17.00px;height:17.00px;border:1.5px solid #333;box-sizing:border-box"></div>
<div class="a" style="left:67.00px;top:1253.20px;width:9.00px;height:1.50px;background:#333"></div>
<div class="t" style="left:91.50px;top:1242.14px;font-size:26.3px;font-weight:400;-webkit-text-stroke:0.6px #1f1f1f;color:#1f1f1f;">Non-Alcoholic Beverages</div>
<div class="t" style="left:-631.00px;width:1200px;text-align:right;top:1243.12px;font-size:25.15px;font-weight:400;-webkit-text-stroke:0.6px #1f1f1f;color:#1f1f1f;">2,518.39</div>
<div class="t" style="left:-471.00px;width:1200px;text-align:right;top:1243.12px;font-size:25.15px;font-weight:400;-webkit-text-stroke:0.6px #1f1f1f;color:#1f1f1f;">2,535.00</div>
<div class="t" style="left:-311.00px;width:1200px;text-align:right;top:1243.12px;font-size:25.15px;font-weight:400;-webkit-text-stroke:0.6px #1f1f1f;color:#1f1f1f;">569.25</div>
<div class="t" style="left:-151.00px;width:1200px;text-align:right;top:1243.12px;font-size:25.15px;font-weight:400;-webkit-text-stroke:0.6px #1f1f1f;color:#1f1f1f;">573.39</div>
<div class="t" style="left:9.00px;width:1200px;text-align:right;top:1243.12px;font-size:25.15px;font-weight:400;-webkit-text-stroke:0.6px #1f1f1f;color:#1f1f1f;">552.18</div>
<div class="t" style="left:169.00px;width:1200px;text-align:right;top:1243.12px;font-size:25.15px;font-weight:400;-webkit-text-stroke:0.6px #1f1f1f;color:#1f1f1f;">556.19</div>
<div class="t" style="left:329.00px;width:1200px;text-align:right;top:1243.12px;font-size:25.15px;font-weight:400;-webkit-text-stroke:0.6px #1f1f1f;color:#1f1f1f;">731.44</div>
<div class="t" style="left:489.00px;width:1200px;text-align:right;top:1243.12px;font-size:25.15px;font-weight:400;-webkit-text-stroke:0.6px #1f1f1f;color:#1f1f1f;">736.51</div>
<div class="t" style="left:649.00px;width:1200px;text-align:right;top:1243.12px;font-size:25.15px;font-weight:400;-webkit-text-stroke:0.6px #1f1f1f;color:#1f1f1f;">665.52</div>
<div class="t" style="left:809.00px;width:1200px;text-align:right;top:1243.12px;font-size:25.15px;font-weight:400;-webkit-text-stroke:0.6px #1f1f1f;color:#1f1f1f;">668.90</div>
</div>
<div class="a" style="left:26.00px;top:613.00px;width:17.00px;height:1.60px;background:#555"></div>
<div class="a" style="left:26.00px;top:618.20px;width:17.00px;height:1.60px;background:#555"></div>
<div class="a" style="left:26.00px;top:623.40px;width:17.00px;height:1.60px;background:#555"></div>
<div class="a" style="left:26.00px;top:628.60px;width:17.00px;height:1.60px;background:#555"></div>
<div class="a" style="left:2572.00px;top:526.00px;width:14.00px;height:429.00px;background:#ababab;border-radius:7px"></div>
<div class="a" style="left:2572.00px;top:955.00px;width:14.00px;height:334.00px;background:#f7f7f7;border-radius:7px"></div>
<div class="a" style="left:748.50px;top:610.00px;width:95.00px;height:50.50px;background:#e8e8e8;border:1.5px solid #cfcfcf;border-radius:4px 4px 0 0;box-sizing:border-box"></div>
<svg class="a" style="left:760.00px;top:614.00px;" width="70" height="44" viewBox="0 0 70 44" fill="none"><rect x="26.5" y="4.5" width="13" height="17" fill="#77b1e8" stroke="#0a4fa0" stroke-width="2"/><rect x="4.5" y="26.5" width="17" height="13" fill="#77b1e8" stroke="#0a4fa0" stroke-width="2"/><path d="M9 23 V12 H22 M18 8 L22 12 L18 16 M5 19 L9 23 L13 19" stroke="#444" stroke-width="2" fill="none" stroke-linejoin="round"/><path d="M51 20 L58 27 L65 20" stroke="#242424" stroke-width="1.8" fill="none" stroke-linecap="round"/></svg>
<div class="a" style="left:750.00px;top:660.00px;width:459.50px;height:434.50px;background:#fff;border-radius:8px;box-shadow:0 6px 18px rgba(0,0,0,0.16),0 0 3px rgba(0,0,0,0.10)"></div>
<div class="t" style="left:773.20px;top:689.10px;font-size:24px;font-weight:400;color:#242424;">Distribute equally</div>
<div class="t" style="left:773.20px;top:757.10px;font-size:24px;font-weight:400;color:#242424;">Distribute to columns with trend</div>
<div class="t" style="left:773.20px;top:828.10px;font-size:24px;font-weight:400;color:#242424;">Distribute to rows with trend</div>
<div class="t" style="left:773.20px;top:898.10px;font-size:24px;font-weight:400;color:#242424;">Distribute by weights of <span style="-webkit-text-stroke:0.6px #242424;font-size:24.5px">2025 Plan</span></div>
<svg class="a" style="left:1158.00px;top:757.00px;" width="16" height="22" viewBox="0 0 16 22" fill="none"><path d="M2 1.5 L13 11 L2 20.5" stroke="#242424" stroke-width="1.8" fill="none" stroke-linecap="round" stroke-linejoin="round"/></svg>
<svg class="a" style="left:1158.00px;top:829.00px;" width="16" height="22" viewBox="0 0 16 22" fill="none"><path d="M2 1.5 L13 11 L2 20.5" stroke="#242424" stroke-width="1.8" fill="none" stroke-linecap="round" stroke-linejoin="round"/></svg>
<div class="a" style="left:758.00px;top:940.00px;width:444.00px;height:1.60px;background:#e0e0e0"></div>
<svg class="a" style="left:779.00px;top:961.00px;" width="30" height="32" viewBox="0 0 30 32" fill="none"><rect x="1.5" y="11" width="27" height="19.5" rx="5" stroke="#242424" stroke-width="1.9" fill="none"/><path d="M9.5 11 V8 A5.5 5.5 0 0 1 20.5 8 V11" stroke="#242424" stroke-width="1.9" fill="none"/><circle cx="15" cy="21" r="1.7" fill="#242424"/></svg>
<div class="t" style="left:825.00px;top:966.20px;font-size:24px;font-weight:400;color:#242424;">Lock this cell</div>
<div class="a" style="left:755.50px;top:1012.00px;width:452.00px;height:78.00px;background:#f5f5f5;border:3.5px solid #f52a68;border-radius:9px;box-sizing:border-box"></div>
<svg class="a" style="left:779.00px;top:1035.00px;" width="30" height="32" viewBox="0 0 30 32" fill="none"><rect x="1.5" y="11" width="27" height="19.5" rx="5" stroke="#242424" stroke-width="1.9" fill="none"/><path d="M9.5 11 V8 A5.5 5.5 0 0 1 20.5 8 V11" stroke="#242424" stroke-width="1.9" fill="none"/><circle cx="15" cy="21" r="1.7" fill="#242424"/></svg>
<div class="t" style="left:825.00px;top:1040.60px;font-size:24px;font-weight:400;color:#242424;">Lock all children</div>
<div class="a" style="left:2083.00px;top:1347.50px;width:20.00px;height:2.00px;background:#424242"></div>
<div class="a" style="left:2136.00px;top:1346.00px;width:199.00px;height:5.00px;background:#c9c9c9;border-radius:3px"></div>
<div class="a" style="left:2136.00px;top:1346.00px;width:86.00px;height:5.00px;background:#317a6a;border-radius:3px"></div>
<div class="a" style="left:2203.50px;top:1331.00px;width:35.00px;height:35.00px;background:#317a6a;border:3px solid #fff;border-radius:50%;box-sizing:border-box"></div>
<svg class="a" style="left:2354.00px;top:1337.00px;" width="24" height="24" viewBox="0 0 24 24" fill="none"><path d="M12 1 V23 M1 12 H23" stroke="#242424" stroke-width="2"/></svg>
<div class="a" style="left:2407.00px;top:1327.00px;width:110.00px;height:38.50px;background:#fff;border:1px solid #cfcfcf;border-bottom:2px solid #616161;border-radius:7px;box-sizing:border-box"></div>
<div class="t" style="left:1862.00px;width:1200px;text-align:center;top:1337.11px;font-size:23.4px;font-weight:400;color:#242424;">100<span style="margin-left:3px">%</span></div>
<svg class="a" style="left:2538.50px;top:1326.50px;" width="37.0" height="37.0" viewBox="0 0 37.0 37.0" fill="none"><path d="M18.50 3.16 L18.90 3.16 L19.30 3.18 L19.70 3.21 L20.10 3.25 L20.50 3.30 L20.90 3.38 L21.28 3.49 L21.65 3.69 L21.96 4.08 L22.16 4.85 L22.15 6.16 L22.02 7.67 L21.93 8.81 L21.97 9.46 L22.10 9.81 L22.28 10.02 L22.47 10.17 L22.68 10.30 L22.89 10.42 L23.09 10.54 L23.30 10.66 L23.51 10.78 L23.73 10.89 L23.96 10.99 L24.23 11.04 L24.59 10.97 L25.18 10.68 L26.12 10.04 L27.36 9.17 L28.49 8.51 L29.26 8.29 L29.75 8.37 L30.11 8.59 L30.40 8.87 L30.66 9.17 L30.91 9.49 L31.14 9.81 L31.37 10.14 L31.58 10.48 L31.79 10.83 L31.98 11.18 L32.17 11.54 L32.35 11.90 L32.51 12.26 L32.66 12.63 L32.79 13.01 L32.89 13.41 L32.90 13.82 L32.72 14.29 L32.15 14.84 L31.01 15.50 L29.64 16.13 L28.61 16.63 L28.06 16.99 L27.83 17.27 L27.73 17.53 L27.70 17.78 L27.69 18.02 L27.69 18.26 L27.69 18.50 L27.69 18.74 L27.69 18.98 L27.70 19.22 L27.73 19.47 L27.83 19.73 L28.06 20.01 L28.61 20.37 L29.64 20.87 L31.01 21.50 L32.15 22.16 L32.72 22.71 L32.90 23.18 L32.89 23.59 L32.79 23.99 L32.66 24.37 L32.51 24.74 L32.35 25.10 L32.17 25.46 L31.98 25.82 L31.79 26.17 L31.58 26.52 L31.37 26.86 L31.14 27.19 L30.91 27.51 L30.66 27.83 L30.40 28.13 L30.11 28.41 L29.75 28.63 L29.26 28.71 L28.49 28.49 L27.36 27.83 L26.12 26.96 L25.18 26.32 L24.59 26.03 L24.23 25.96 L23.96 26.01 L23.73 26.11 L23.51 26.22 L23.30 26.34 L23.09 26.46 L22.89 26.58 L22.68 26.70 L22.47 26.83 L22.28 26.98 L22.10 27.19 L21.97 27.54 L21.93 28.19 L22.02 29.33 L22.15 30.84 L22.16 32.15 L21.96 32.92 L21.65 33.31 L21.28 33.51 L20.90 33.62 L20.50 33.70 L20.10 33.75 L19.70 33.79 L19.30 33.82 L18.90 33.84 L18.50 33.84 L18.10 33.84 L17.70 33.82 L17.30 33.79 L16.90 33.75 L16.50 33.70 L16.10 33.62 L15.72 33.51 L15.35 33.31 L15.04 32.92 L14.84 32.15 L14.85 30.84 L14.98 29.33 L15.07 28.19 L15.03 27.54 L14.90 27.19 L14.72 26.98 L14.53 26.83 L14.32 26.70 L14.11 26.58 L13.91 26.46 L13.70 26.34 L13.49 26.22 L13.27 26.11 L13.04 26.01 L12.77 25.96 L12.41 26.03 L11.82 26.32 L10.88 26.96 L9.64 27.83 L8.51 28.49 L7.74 28.71 L7.25 28.63 L6.89 28.41 L6.60 28.13 L6.34 27.83 L6.09 27.51 L5.86 27.19 L5.63 26.86 L5.42 26.52 L5.21 26.17 L5.02 25.82 L4.83 25.46 L4.65 25.10 L4.49 24.74 L4.34 24.37 L4.21 23.99 L4.11 23.59 L4.10 23.18 L4.28 22.71 L4.85 22.16 L5.99 21.50 L7.36 20.87 L8.39 20.37 L8.94 20.01 L9.17 19.73 L9.27 19.47 L9.30 19.22 L9.31 18.98 L9.31 18.74 L9.31 18.50 L9.31 18.26 L9.31 18.02 L9.30 17.78 L9.27 17.53 L9.17 17.27 L8.94 16.99 L8.39 16.63 L7.36 16.13 L5.99 15.50 L4.85 14.84 L4.28 14.29 L4.10 13.82 L4.11 13.41 L4.21 13.01 L4.34 12.63 L4.49 12.26 L4.65 11.90 L4.83 11.54 L5.02 11.18 L5.21 10.83 L5.42 10.48 L5.63 10.14 L5.86 9.81 L6.09 9.49 L6.34 9.17 L6.60 8.87 L6.89 8.59 L7.25 8.37 L7.74 8.29 L8.51 8.51 L9.64 9.17 L10.88 10.04 L11.82 10.68 L12.41 10.97 L12.77 11.04 L13.04 10.99 L13.27 10.89 L13.49 10.78 L13.70 10.66 L13.91 10.54 L14.11 10.42 L14.32 10.30 L14.53 10.17 L14.72 10.02 L14.90 9.81 L15.03 9.46 L15.07 8.81 L14.98 7.67 L14.85 6.16 L14.84 4.85 L15.04 4.08 L15.35 3.69 L15.72 3.49 L16.10 3.38 L16.50 3.30 L16.90 3.25 L17.30 3.21 L17.70 3.18 L18.10 3.16 Z" stroke="#2b2b2b" stroke-width="1.9" stroke-linejoin="round" fill="none"/><circle cx="18.5" cy="18.5" r="4.34" stroke="#117865" stroke-width="1.9" fill="none"/></svg>
<svg class="a" style="left:2602.20px;top:1400.20px;" width="35.6" height="35.6" viewBox="0 0 35.6 35.6" fill="none"><path d="M17.80 3.15 L18.18 3.16 L18.57 3.17 L18.95 3.20 L19.33 3.24 L19.71 3.29 L20.09 3.36 L20.46 3.47 L20.81 3.66 L21.11 4.03 L21.29 4.77 L21.29 6.02 L21.16 7.46 L21.08 8.55 L21.11 9.17 L21.24 9.50 L21.41 9.70 L21.59 9.85 L21.79 9.97 L21.99 10.09 L22.19 10.20 L22.39 10.32 L22.59 10.43 L22.79 10.54 L23.01 10.63 L23.27 10.67 L23.62 10.61 L24.17 10.34 L25.07 9.72 L26.26 8.89 L27.34 8.26 L28.07 8.05 L28.54 8.13 L28.88 8.34 L29.16 8.60 L29.41 8.89 L29.65 9.19 L29.87 9.50 L30.09 9.82 L30.29 10.15 L30.49 10.48 L30.67 10.81 L30.85 11.15 L31.02 11.49 L31.18 11.84 L31.32 12.20 L31.45 12.56 L31.54 12.94 L31.55 13.33 L31.38 13.78 L30.83 14.31 L29.75 14.93 L28.43 15.54 L27.45 16.01 L26.93 16.35 L26.71 16.63 L26.62 16.87 L26.58 17.11 L26.57 17.34 L26.57 17.57 L26.57 17.80 L26.57 18.03 L26.57 18.26 L26.58 18.49 L26.62 18.73 L26.71 18.97 L26.93 19.25 L27.45 19.59 L28.43 20.06 L29.75 20.67 L30.83 21.29 L31.38 21.82 L31.55 22.27 L31.54 22.66 L31.45 23.04 L31.32 23.40 L31.18 23.76 L31.02 24.11 L30.85 24.45 L30.67 24.79 L30.49 25.12 L30.29 25.45 L30.09 25.78 L29.87 26.10 L29.65 26.41 L29.41 26.71 L29.16 27.00 L28.88 27.26 L28.54 27.47 L28.07 27.55 L27.34 27.34 L26.26 26.71 L25.07 25.88 L24.17 25.26 L23.62 24.99 L23.27 24.93 L23.01 24.97 L22.79 25.06 L22.59 25.17 L22.39 25.28 L22.19 25.40 L21.99 25.51 L21.79 25.63 L21.59 25.75 L21.41 25.90 L21.24 26.10 L21.11 26.43 L21.08 27.05 L21.16 28.14 L21.29 29.58 L21.29 30.83 L21.11 31.57 L20.81 31.94 L20.46 32.13 L20.09 32.24 L19.71 32.31 L19.33 32.36 L18.95 32.40 L18.57 32.43 L18.18 32.44 L17.80 32.45 L17.42 32.44 L17.03 32.43 L16.65 32.40 L16.27 32.36 L15.89 32.31 L15.51 32.24 L15.14 32.13 L14.79 31.94 L14.49 31.57 L14.31 30.83 L14.31 29.58 L14.44 28.14 L14.52 27.05 L14.49 26.43 L14.36 26.10 L14.19 25.90 L14.01 25.75 L13.81 25.63 L13.61 25.51 L13.41 25.40 L13.21 25.28 L13.01 25.17 L12.81 25.06 L12.59 24.97 L12.33 24.93 L11.98 24.99 L11.43 25.26 L10.53 25.88 L9.34 26.71 L8.26 27.34 L7.53 27.55 L7.06 27.47 L6.72 27.26 L6.44 27.00 L6.19 26.71 L5.95 26.41 L5.73 26.10 L5.51 25.78 L5.31 25.45 L5.11 25.12 L4.93 24.79 L4.75 24.45 L4.58 24.11 L4.42 23.76 L4.28 23.40 L4.15 23.04 L4.06 22.66 L4.05 22.27 L4.22 21.82 L4.77 21.29 L5.85 20.67 L7.17 20.06 L8.15 19.59 L8.67 19.25 L8.89 18.97 L8.98 18.73 L9.02 18.49 L9.03 18.26 L9.03 18.03 L9.03 17.80 L9.03 17.57 L9.03 17.34 L9.02 17.11 L8.98 16.87 L8.89 16.63 L8.67 16.35 L8.15 16.01 L7.17 15.54 L5.85 14.93 L4.77 14.31 L4.22 13.78 L4.05 13.33 L4.06 12.94 L4.15 12.56 L4.28 12.20 L4.42 11.84 L4.58 11.49 L4.75 11.15 L4.93 10.81 L5.11 10.48 L5.31 10.15 L5.51 9.82 L5.73 9.50 L5.95 9.19 L6.19 8.89 L6.44 8.60 L6.72 8.34 L7.06 8.13 L7.53 8.05 L8.26 8.26 L9.34 8.89 L10.53 9.72 L11.43 10.34 L11.98 10.61 L12.33 10.67 L12.59 10.63 L12.81 10.54 L13.01 10.43 L13.21 10.32 L13.41 10.20 L13.61 10.09 L13.81 9.97 L14.01 9.85 L14.19 9.70 L14.36 9.50 L14.49 9.17 L14.52 8.55 L14.44 7.46 L14.31 6.02 L14.31 4.77 L14.49 4.03 L14.79 3.66 L15.14 3.47 L15.51 3.36 L15.89 3.29 L16.27 3.24 L16.65 3.20 L17.03 3.17 L17.42 3.16 Z" stroke="#2b2b2b" stroke-width="1.9" stroke-linejoin="round" fill="none"/><circle cx="17.8" cy="17.8" r="4.14" stroke="#2b2b2b" stroke-width="1.9" fill="none"/></svg>
<svg class="a" style="left:2670.00px;top:1396.00px;" width="40" height="40" viewBox="0 0 40 40" fill="none"><path d="M14 35 H9.5 Q5.5 35 5.5 31 V9 Q5.5 5 9.5 5 H23.5 Q27.5 5 27.5 9 V19" stroke="#2b2b2b" stroke-width="1.9" fill="none" stroke-linecap="round"/><path d="M11 13 H21.5 M11 21 H16.5" stroke="#2b2b2b" stroke-width="1.9" stroke-linecap="round"/><circle cx="25.2" cy="28.9" r="10" fill="#fff"/><circle cx="25.2" cy="28.9" r="9" fill="#117865"/><path d="M25.2 24.2 V33.6 M20.5 28.9 H29.9" stroke="#fff" stroke-width="2.2"/></svg>
<svg class="a" style="left:2740.00px;top:1396.00px;" width="45" height="45" viewBox="0 0 45 45" fill="none"><rect x="17.1" y="14.9" width="21.8" height="21.9" rx="6" stroke="#1f1f1f" stroke-width="2" fill="none"/><path d="M13 31 V19.5 A8.5 8.5 0 0 1 21.5 11 H33.5" stroke="#1f1f1f" stroke-width="1.9" fill="none"/><path d="M9 27 V17.5 A10.5 10.5 0 0 1 19.5 7 H29.5" stroke="#1f1f1f" stroke-width="1.9" fill="none"/></svg>
<svg class="a" style="left:40.00px;top:1395.00px;" width="60" height="50" viewBox="0 0 60 50" fill="none"><circle cx="26.4" cy="24.3" r="12.6" stroke="#3b3b3b" stroke-width="3.7" fill="none"/><circle cx="26.4" cy="24.3" r="5.5" stroke="#3b3b3b" stroke-width="3.5" fill="none"/><path d="M26.4 24.3 L41 9.7" stroke="#e9e9e9" stroke-width="5.5"/><path d="M27 23.7 L40.5 10.2" stroke="#3b3b3b" stroke-width="2.1" stroke-linecap="round"/><path d="M37 10.5 L39.8 7 L41 10 L44 11.2 L40.5 14 Z" fill="#3b3b3b" stroke="#3b3b3b" stroke-width="1" stroke-linejoin="round"/></svg>
<svg class="a" style="left:0;top:0" width="2812" height="260" viewBox="0 0 2812 260"><path d="M76 110.5 V141.6 H88.6" stroke="#333333" stroke-width="1.9" fill="none" stroke-linecap="round" stroke-linejoin="round" /><path d="M76 122.4 L84.5 118.9 L91.4 123 L101.9 115 V123.4" stroke="#333333" stroke-width="1.9" fill="none" stroke-linecap="round" stroke-linejoin="round" /><rect x="97" y="128" width="6" height="14" fill="#dcefea"/><rect x="91.4" y="126.6" width="17.2" height="16.7" rx="3.5" stroke="#333333" stroke-width="1.9" fill="none"/><path d="M97 128 V142 M103 128 V142" stroke="#117865" stroke-width="2" fill="none" stroke-linecap="round" stroke-linejoin="round" /><path d="M205 139 H197 Q192.8 139 192.8 135 V116.6 Q192.8 112.6 196.8 112.6 H215 Q219 112.6 219 116.6 V133" stroke="#c6c6c6" stroke-width="1.9" fill="none" stroke-linecap="round" stroke-linejoin="round" /><path d="M192.8 118.9 H219" stroke="#c6c6c6" stroke-width="1.9" fill="none" stroke-linecap="round" stroke-linejoin="round" /><circle cx="200.1" cy="126" r="1.5" fill="#c6c6c6"/><circle cx="206" cy="126" r="1.5" fill="#c6c6c6"/><circle cx="212" cy="126" r="1.5" fill="#c6c6c6"/><circle cx="200.1" cy="131.8" r="1.5" fill="#c6c6c6"/><circle cx="206" cy="131.8" r="1.5" fill="#c6c6c6"/><path d="M207.5 139.8 H222.5 M210.5 136.8 L207.5 139.8 L210.5 142.8 M219.5 136.8 L222.5 139.8 L219.5 142.8" stroke="#c3dfd8" stroke-width="2" fill="none" stroke-linecap="round" stroke-linejoin="round" /><rect x="326.5" y="108.7" width="9.1" height="8.1" rx="2" stroke="#333333" stroke-width="1.9" fill="none"/><path d="M331 116.8 V119 L334.5 123 M331 119 Q328.5 123.5 324 124.8 Q320.3 126 320.3 130.5" stroke="#333333" stroke-width="1.9" fill="none" stroke-linecap="round" stroke-linejoin="round" /><rect x="315.4" y="130.5" width="9.6" height="8.5" rx="2" stroke="#333333" stroke-width="1.9" fill="none"/><circle cx="340.1" cy="133" r="9.6" fill="#fff"/><circle cx="340.1" cy="133" r="8.8" fill="#117865"/><path d="M340.1 128.8 V137.2 M335.9 133 H344.3" stroke="#fff" stroke-width="2.2" fill="none" stroke-linecap="round" stroke-linejoin="round" /><rect x="454.8" y="108.7" width="9.1" height="8.1" rx="2" stroke="#c6c6c6" stroke-width="1.9" fill="none"/><path d="M459.3 116.8 V119 L462.8 123 M459.3 119 Q456.8 123.5 452.3 124.8 Q448.6 126 448.6 130.5" stroke="#c6c6c6" stroke-width="1.9" fill="none" stroke-linecap="round" stroke-linejoin="round" /><rect x="443.7" y="130.5" width="9.6" height="8.5" rx="2" stroke="#c6c6c6" stroke-width="1.9" fill="none"/><path d="M463 128.6 H476.8 M472.8 124.6 L476.8 128.6 L472.8 132.6 M476.8 137.5 H463 M467 133.5 L463 137.5 L467 141.5" stroke="#c3dfd8" stroke-width="2" fill="none" stroke-linecap="round" stroke-linejoin="round" /><path d="M570.4 114.7 H597.7 M570.4 125.9 H578.4 M589 125.9 H597.7 M570.4 137 H597.7" stroke="#333333" stroke-width="2" fill="none" stroke-linecap="round" stroke-linejoin="round" /><circle cx="583.7" cy="125.9" r="5" stroke="#117865" stroke-width="2" fill="none"/><path d="M718 112.3 H732.5 Q736.5 112.3 736.5 116.3 V135.5 Q736.5 139.5 732.5 139.5 H713.3 Q709.3 139.5 709.3 135.5 V127" stroke="#333333" stroke-width="1.9" fill="none" stroke-linecap="round" stroke-linejoin="round" /><path d="M710.5 138.5 L723 126.5 L735.5 138.5" stroke="#333333" stroke-width="1.9" fill="none" stroke-linecap="round" stroke-linejoin="round" /><circle cx="728" cy="121" r="2.2" stroke="#333333" stroke-width="1.7" fill="none"/><circle cx="714" cy="116.8" r="9" fill="#117865"/><path d="M714 112.3 V121.3 M709.5 116.8 H718.5" stroke="#fff" stroke-width="2.2" fill="none" stroke-linecap="round" stroke-linejoin="round" /><path d="M852.6 112.3 H867.1 Q871.1 112.3 871.1 116.3 V135.5 Q871.1 139.5 867.1 139.5 H847.9 Q843.9 139.5 843.9 135.5 V127" stroke="#333333" stroke-width="1.9" fill="none" stroke-linecap="round" stroke-linejoin="round" /><path d="M845.1 138.5 L857.6 126.5 L870.1 138.5" stroke="#333333" stroke-width="1.9" fill="none" stroke-linecap="round" stroke-linejoin="round" /><circle cx="862.6" cy="121" r="2.2" stroke="#333333" stroke-width="1.7" fill="none"/><circle cx="848.6" cy="116.8" r="9" fill="#117865"/><path d="M848.6 111.5 V117.5 H853" stroke="#fff" stroke-width="2" fill="none" stroke-linecap="round" stroke-linejoin="round" /><path d="M992.7 112.3 H1007.2 Q1011.2 112.3 1011.2 116.3 V135.5 Q1011.2 139.5 1007.2 139.5 H988.0 Q984.0 139.5 984.0 135.5 V127" stroke="#c6c6c6" stroke-width="1.9" fill="none" stroke-linecap="round" stroke-linejoin="round" /><path d="M985.2 138.5 L997.7 126.5 L1010.2 138.5" stroke="#c6c6c6" stroke-width="1.9" fill="none" stroke-linecap="round" stroke-linejoin="round" /><circle cx="1002.7" cy="121" r="2.2" stroke="#c6c6c6" stroke-width="1.7" fill="none"/><rect x="980.4" y="108" width="17" height="15.8" rx="3" stroke="#c3dfd8" stroke-width="0" fill="#c3dfd8"/><path d="M984.5 113.5 H993.5 M984.5 118.5 H993.5" stroke="#fff" stroke-width="2" fill="none" stroke-linecap="round" stroke-linejoin="round" /><rect x="1105.7" y="112.3" width="26.9" height="26.8" rx="4" stroke="#333333" stroke-width="1.9" fill="none"/><path d="M1114.5 112.3 V139.1 M1124.2 112.3 V139.1 M1105.7 120.7 H1132.6 M1105.7 131.4 H1132.6" stroke="#333333" stroke-width="1.9" fill="none" stroke-linecap="round" stroke-linejoin="round" /><path d="M1121 141.5 L1134.5 128" stroke="#fff" stroke-width="11" fill="none" stroke-linecap="round" stroke-linejoin="round" /><path d="M1121 141.5 L1134.5 128" stroke="#117865" stroke-width="6.5" fill="none" stroke-linecap="round" stroke-linejoin="round" /><path d="M1202 112.3 H1215.3 Q1219.3 112.3 1219.3 116.3 V135.1 Q1219.3 139.1 1215.3 139.1 H1196.7 Q1192.7 139.1 1192.7 135.1 V128.5" stroke="#333333" stroke-width="1.9" fill="none" stroke-linecap="round" stroke-linejoin="round" /><path d="M1201.3 122.4 V139.1 M1211.6 112.3 V139.1 M1201.3 122.4 H1219.3 M1192.7 132.1 H1219.3" stroke="#333333" stroke-width="1.9" fill="none" stroke-linecap="round" stroke-linejoin="round" /><path d="M1193.4 123.5 Q1193.4 112.9 1204.6 112.9" stroke="#117865" stroke-width="2" fill="none" stroke-linecap="round" stroke-linejoin="round" /><path d="M1201.5 109 L1205 112.9 L1201.5 116.8 M1189.5 120 L1193.4 124 L1197.3 120" stroke="#117865" stroke-width="2" fill="none" stroke-linecap="round" stroke-linejoin="round" /><path d="M1289.8 110 V141.6 M1277.3 128.9 H1308.7" stroke="#333333" stroke-width="1.9" fill="none" stroke-linecap="round" stroke-linejoin="round" /><circle cx="1289.8" cy="128.9" r="9.3" stroke="#333333" stroke-width="1.9" fill="none"/><path d="M1289.8 121 V137 M1281.9 128.9 H1297.7" stroke="#117865" stroke-width="2" fill="none" stroke-linecap="round" stroke-linejoin="round" /><path d="M1404 137.5 H1391.7 Q1387.7 137.5 1387.7 133.5 V114.5 Q1387.7 110.5 1391.7 110.5 H1410.2 Q1414.2 110.5 1414.2 114.5 V125" stroke="#333333" stroke-width="1.9" fill="none" stroke-linecap="round" stroke-linejoin="round" /><path d="M1390.4 115.5 h3.6 v3.6 h-3.6 Z" fill="#333333"/><path d="M1396.5 117.3 H1410.5" stroke="#333333" stroke-width="1.9" fill="none" stroke-linecap="round" stroke-linejoin="round" /><path d="M1390.4 121.8 h3.6 v3.6 h-3.6 Z" fill="#333333"/><path d="M1396.5 123.6 H1404.5" stroke="#333333" stroke-width="1.9" fill="none" stroke-linecap="round" stroke-linejoin="round" /><path d="M1390.4 128.1 h3.6 v3.6 h-3.6 Z" fill="#333333"/><path d="M1396.5 129.9 H1401.5" stroke="#333333" stroke-width="1.9" fill="none" stroke-linecap="round" stroke-linejoin="round" /><path d="M1405 131.5 Q1405 129.3 1407.2 129.3 H1416.8 Q1419 129.3 1419 131.5 V139.4 Q1419 141.6 1416.8 141.6 H1407.2 Q1405 141.6 1405 139.4 Z" fill="#117865"/><path d="M1408.3 129.5 V127.5 A3.7 3.7 0 0 1 1415.7 127.5 V129.5" stroke="#117865" stroke-width="2.2" fill="none" stroke-linecap="round" stroke-linejoin="round" /><path d="M1535 139.7 H1526.5 Q1522.5 139.7 1522.5 135.7 V116.5 Q1522.5 112.5 1526.5 112.5 H1545.7 Q1549.7 112.5 1549.7 116.5 V124" stroke="#333333" stroke-width="1.9" fill="none" stroke-linecap="round" stroke-linejoin="round" /><path d="M1525.2 117.5 h3.6 v3.6 h-3.6 Z" fill="#333333"/><path d="M1531.3 119.3 H1545.3" stroke="#333333" stroke-width="1.9" fill="none" stroke-linecap="round" stroke-linejoin="round" /><path d="M1525.2 123.8 h3.6 v3.6 h-3.6 Z" fill="#333333"/><path d="M1531.3 125.6 H1539.3" stroke="#333333" stroke-width="1.9" fill="none" stroke-linecap="round" stroke-linejoin="round" /><path d="M1525.2 130.1 h3.6 v3.6 h-3.6 Z" fill="#333333"/><path d="M1531.3 131.9 H1535.3" stroke="#333333" stroke-width="1.9" fill="none" stroke-linecap="round" stroke-linejoin="round" /><path d="M1537.2 141.4 Q1537.2 134.5 1539.8 132 Q1541.8 130.2 1544.7 130.2 Q1547.6 130.2 1549.4 132.2 Q1550.3 133.4 1550.6 134.8 M1537.2 141.4 H1543.2" stroke="#117865" stroke-width="1.9" fill="none" stroke-linecap="round" stroke-linejoin="round" /><circle cx="1544.7" cy="127.6" r="2.2" stroke="#117865" stroke-width="1.7" fill="none"/><path d="M1546 137 H1553.5 M1546 140.8 H1553.5" stroke="#117865" stroke-width="1.9" fill="none" stroke-linecap="round" stroke-linejoin="round" /><path d="M1670 137.6 H1662.6 Q1658.6 137.6 1658.6 133.6 V114.8 Q1658.6 110.8 1662.6 110.8 H1681.6 Q1685.6 110.8 1685.6 114.8 V128" stroke="#333333" stroke-width="1.9" fill="none" stroke-linecap="round" stroke-linejoin="round" /><path d="M1661.3 115.8 h3.6 v3.6 h-3.6 Z" fill="#333333"/><path d="M1667.3999999999999 117.6 H1681.3999999999999" stroke="#333333" stroke-width="1.9" fill="none" stroke-linecap="round" stroke-linejoin="round" /><path d="M1661.3 122.1 h3.6 v3.6 h-3.6 Z" fill="#333333"/><path d="M1667.3999999999999 123.89999999999999 H1681.3999999999999" stroke="#333333" stroke-width="1.9" fill="none" stroke-linecap="round" stroke-linejoin="round" /><path d="M1661.3 128.39999999999998 h3.6 v3.6 h-3.6 Z" fill="#333333"/><path d="M1667.3999999999999 130.2 H1668.3999999999999" stroke="#333333" stroke-width="1.9" fill="none" stroke-linecap="round" stroke-linejoin="round" /><path d="M1673 132.5 V141.7 M1689 132.5 V141.7" stroke="#117865" stroke-width="2" fill="none" stroke-linecap="round" stroke-linejoin="round" /><path d="M1676.5 137 H1685.5 M1679 134.5 L1676.5 137 L1679 139.5 M1683 134.5 L1685.5 137 L1683 139.5" stroke="#117865" stroke-width="1.6" fill="none" stroke-linecap="round" stroke-linejoin="round" /><path d="M1775.6 130 V113.5 Q1775.6 110.5 1778.6 110.5 H1792" stroke="#333333" stroke-width="1.9" fill="none" stroke-linecap="round" stroke-linejoin="round" /><path d="M1797 115.5 Q1797 114 1795 114 H1781.5 Q1779.5 114 1779.5 116 V141 Q1779.5 143 1781.5 143 H1793" stroke="#333333" stroke-width="1.9" fill="none" stroke-linecap="round" stroke-linejoin="round" /><rect x="1781" y="118" width="7.5" height="6" fill="#d6d6d6"/><rect x="1781" y="133" width="7.5" height="7" fill="#d6d6d6"/><path d="M1789 114 V143 M1779.5 125 H1789 M1779.5 132 H1789" stroke="#333333" stroke-width="1.6" fill="none" stroke-linecap="round" stroke-linejoin="round" /><rect x="1794.5" y="120.5" width="14.5" height="23" rx="2.5" stroke="#333333" stroke-width="1.9" fill="#fff"/><rect x="1797.5" y="124" width="8.5" height="3.5" stroke="#333" stroke-width="1.4" fill="none"/><circle cx="1798.2" cy="131.0" r="0.9" fill="#333333"/><circle cx="1801.8" cy="131.0" r="0.9" fill="#333333"/><circle cx="1805.4" cy="131.0" r="0.9" fill="#333333"/><circle cx="1798.2" cy="134.6" r="0.9" fill="#333333"/><circle cx="1801.8" cy="134.6" r="0.9" fill="#333333"/><circle cx="1805.4" cy="134.6" r="0.9" fill="#333333"/><circle cx="1798.2" cy="138.2" r="0.9" fill="#333333"/><circle cx="1801.8" cy="138.2" r="0.9" fill="#333333"/><circle cx="1805.4" cy="138.2" r="0.9" fill="#333333"/><path d="M1903.5 112.5 Q1900 112.5 1900 116 V123 Q1900 126 1897.5 126 Q1900 126 1900 129 V136.2 Q1900 139.7 1903.5 139.7" stroke="#333333" stroke-width="1.7" fill="none" stroke-linecap="round" stroke-linejoin="round" /><path d="M1924 112.5 Q1927.5 112.5 1927.5 116 V123 Q1927.5 126 1930 126 Q1927.5 126 1927.5 129 V136.2 Q1927.5 139.7 1924 139.7" stroke="#333333" stroke-width="1.7" fill="none" stroke-linecap="round" stroke-linejoin="round" /><path d="M1907.5 117.5 L1920 135.5 M1920 117.5 L1907.5 135.5" stroke="#117865" stroke-width="1.9" fill="none" stroke-linecap="round" stroke-linejoin="round" /><circle cx="2045.9" cy="113.7" r="5.3" stroke="#333333" stroke-width="1.9" fill="none"/><circle cx="2062" cy="113.7" r="5.3" stroke="#333333" stroke-width="1.9" fill="none"/><circle cx="2045.9" cy="134.2" r="5.3" stroke="#333333" stroke-width="1.9" fill="none"/><path d="M2045.9 119 V128.9 M2062 119 V121 Q2062 124.8 2058 124.8 H2045.9" stroke="#333333" stroke-width="1.9" fill="none" stroke-linecap="round" stroke-linejoin="round" /><path d="M2071.8 131 A6.6 6.6 0 1 1 2066 126.5" stroke="#117865" stroke-width="1.9" fill="none" stroke-linecap="round" stroke-linejoin="round" /><path d="M2064 123.5 L2067 126.5 L2064 129.5 M2062.5 133.5 L2065 136 L2069.5 131.5" stroke="#117865" stroke-width="1.9" fill="none" stroke-linecap="round" stroke-linejoin="round" /><path d="M2176 133 V114.6 A4 4 0 0 1 2180 110.6 H2200.5 A4 4 0 0 1 2200.5 118.6 H2196.5 V137 A4.5 4.5 0 0 1 2187.5 137 V133 H2174 A4 4 0 0 0 2170 137 A4.6 4.6 0 0 0 2174.6 141.6 H2192" stroke="#333333" stroke-width="1.9" fill="none" stroke-linecap="round" stroke-linejoin="round" /><path d="M2196.5 114.6 A4 4 0 0 0 2200.5 110.6" stroke="#333333" stroke-width="1.9" fill="none" stroke-linecap="round" stroke-linejoin="round" /><path d="M2179.5 120 H2192.5 M2179.5 124 H2192.5 M2179.5 128 H2192.5" stroke="#117865" stroke-width="1.9" fill="none" stroke-linecap="round" stroke-linejoin="round" /><path d="M2312 123.5 V114.6 Q2312 110.6 2316 110.6 H2322.5 L2332.5 120.6 V137.6 Q2332.5 141.6 2328.5 141.6 H2325" stroke="#333333" stroke-width="1.9" fill="none" stroke-linecap="round" stroke-linejoin="round" /><path d="M2322.5 110.6 V117 Q2322.5 120.6 2326 120.6 H2332.5" stroke="#333333" stroke-width="1.9" fill="none" stroke-linecap="round" stroke-linejoin="round" /><circle cx="2311" cy="133" r="5.5" stroke="#117865" stroke-width="1.9" fill="none"/><path d="M2315 137.5 L2321.5 143.5" stroke="#117865" stroke-width="2.2" fill="none" stroke-linecap="round" stroke-linejoin="round" /></svg>
</body></html>
